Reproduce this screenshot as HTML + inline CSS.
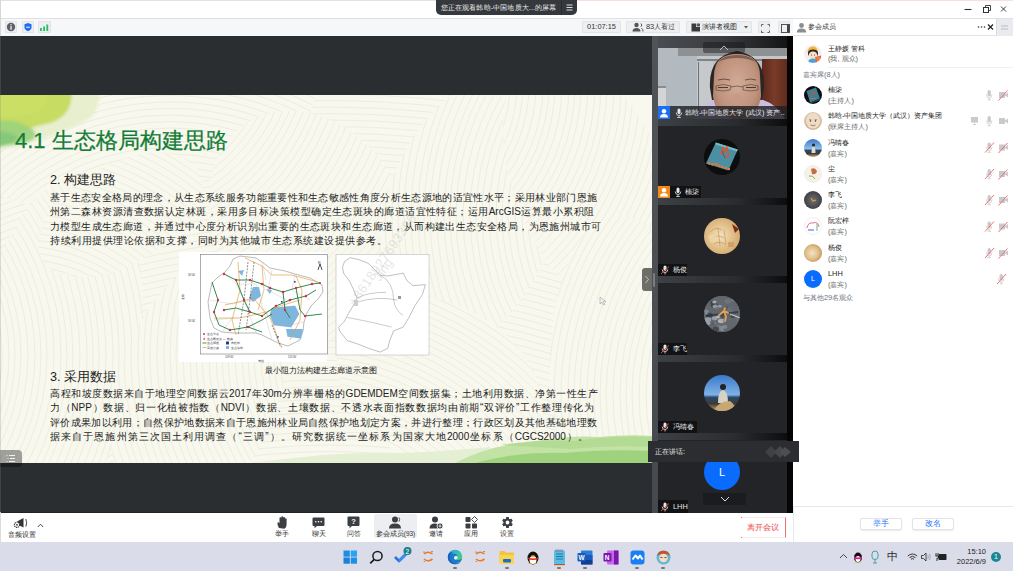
<!DOCTYPE html>
<html><head><meta charset="utf-8">
<style>
*{margin:0;padding:0;box-sizing:border-box}
html,body{width:1013px;height:571px;overflow:hidden;background:#fff;font-family:"Liberation Sans",sans-serif}
.a{position:absolute}
.nw{white-space:nowrap;overflow:hidden}
.tb{position:absolute;top:21px;height:12px;background:#eeeff1;border:1px solid #e3e4e7;border-radius:1px;font-size:7.4px;line-height:10px;color:#333;white-space:nowrap}
.bl{position:absolute;text-align:justify;text-align-last:justify;font-size:10px;line-height:14.6px;color:#222;white-space:nowrap;overflow:hidden}
.tile{position:absolute;left:658px;width:129px;background:#232427}
.lab{position:absolute;left:0;bottom:0;height:12px;background:#111214;color:#e8e8e8;font-size:7.4px;line-height:12px;white-space:nowrap}
.av{position:absolute;border-radius:50%;overflow:hidden}
.prow{position:absolute;left:793px;width:220px;height:26px}
.pn{position:absolute;left:35px;top:0;font-size:7.4px;line-height:10px;color:#222;white-space:nowrap}
.ps{position:absolute;left:35px;top:10px;font-size:7.4px;line-height:10px;color:#6a6a6a;white-space:nowrap}
.bi{position:absolute;top:514px;width:30px;text-align:center;font-size:7px;line-height:8px;color:#333}
.ti{position:absolute;top:548px}
</style></head><body>
<!-- ===== title bar ===== -->
<div class="a" style="left:0;top:0;width:440px;height:1px;background:#e2e2e2"></div><div class="a" style="left:440px;top:0;width:573px;height:1px;background:#f3e2dc"></div>
<div class="a" style="left:0;top:18px;width:1013px;height:1px;background:#dfe0e3"></div>

<!-- floating pill -->
<div class="a" style="left:436px;top:0;width:141px;height:15px;background:#35383c;border-radius:0 0 5px 5px"></div>
<div class="a nw" style="left:441px;top:3px;width:118px;font-size:7.4px;letter-spacing:0.1px;line-height:9px;color:#f0f0f0">您正在观看韩晗-中国地质大...的屏幕</div>
<div class="a" style="left:561px;top:0;width:1px;height:15px;background:#2a2c30"></div>
<svg class="a" style="left:565px;top:3px" width="9" height="9"><path d="M1.5 2h6M1.5 4.5h6M1.5 7h6" stroke="#ddd" stroke-width="1"/></svg>
<!-- window controls -->
<svg class="a" style="left:962px;top:4px" width="48" height="11">
<path d="M2.5 5.5h7" stroke="#333" stroke-width="1.1"/>
<rect x="21.5" y="3.5" width="5" height="5" fill="none" stroke="#333" stroke-width="1"/><path d="M23.5 3.5V1.5H28.5V6.5H26.5" fill="none" stroke="#333" stroke-width="0.9"/>
<path d="M39 2.5l5 5M44 2.5l-5 5" stroke="#333" stroke-width="0.95"/>
</svg>
<!-- ===== toolbar ===== -->
<div class="a" style="left:1px;top:19px;width:792px;height:17px;background:#f6f7f9"></div>
<div class="a" style="left:793px;top:19px;width:220px;height:17px;background:#fff"></div>
<div class="a" style="left:793px;top:35px;width:220px;height:1px;background:#e3e4e8"></div>
<div class="a" style="left:996px;top:19px;width:17px;height:17px;background:#e9ebef;border-left:1px solid #dcdde1"></div>
<svg class="a" style="left:1000px;top:24px" width="9" height="7"><path d="M1 2h7M1 5h7" stroke="#b9bcc2" stroke-width="1.2"/></svg>
<!-- left icons -->
<div class="a" style="left:5px;top:21px;width:12px;height:12px;background:#eceef1;border:1px solid #e2e4e7;border-radius:1px"></div>
<svg class="a" style="left:6px;top:22px" width="10" height="10"><circle cx="5" cy="5" r="4.2" fill="#5c5f66"/><rect x="4.4" y="2.2" width="1.2" height="1.1" fill="#fff"/><rect x="4.4" y="4.1" width="1.2" height="3.7" fill="#fff"/></svg>
<div class="a" style="left:22px;top:21px;width:12px;height:12px;background:#eceef1;border:1px solid #e2e4e7;border-radius:1px"></div>
<svg class="a" style="left:23px;top:22px" width="10" height="10"><path d="M5 1L8.5 2.2V5.2Q8.5 7.8 5 9.2Q1.5 7.8 1.5 5.2V2.2Z" fill="#1e6cf0"/><path d="M3.2 5.2h3.6" stroke="#fff" stroke-width="1"/></svg>
<div class="a" style="left:38px;top:21px;width:13px;height:12px;background:#eceef1;border:1px solid #e2e4e7;border-radius:1px"></div>
<svg class="a" style="left:39px;top:22px" width="11" height="10"><rect x="1" y="6" width="1.8" height="3" fill="#22c05a"/><rect x="4.2" y="4.5" width="1.8" height="4.5" fill="#22c05a"/><rect x="7.4" y="2.5" width="1.8" height="6.5" fill="#22c05a"/></svg>
<!-- center-right toolbar -->
<div class="tb" style="left:582px;width:39px;text-align:center;color:#333">01:07:15</div>
<div class="tb" style="left:626px;width:54px">
 <svg class="a" style="left:5px;top:0px" width="12" height="10"><circle cx="4.5" cy="3" r="2.2" fill="#555"/><path d="M0.5 9.5Q0.5 6 4.5 6Q8.5 6 8.5 9.5Z" fill="#555"/><path d="M9 1.5Q10.5 3 9 4.8M9.5 6.2Q11 7 11 9.5" stroke="#555" stroke-width="1" fill="none"/></svg>
 <span class="a" style="left:19px;top:0">83人看过</span></div>
<div class="tb" style="left:686px;width:66px">
 <svg class="a" style="left:4px;top:1px" width="10" height="9"><path d="M0.5 0.5H5V4H9V8.5H0.5Z" fill="#3a3a3a"/><rect x="5.6" y="0.5" width="3.4" height="2.9" fill="#555"/></svg>
 <span class="a" style="left:15px;top:0;color:#222">演讲者视图</span>
 <svg class="a" style="left:57px;top:4px" width="4" height="3"><path d="M0 0h4L2 2.5z" fill="#555"/></svg></div>
<div class="tb" style="left:758px;width:12px"><svg class="a" style="left:1.5px;top:1.5px" width="9" height="9"><path d="M0.5 2.5V0.5H2.5M6.5 0.5h2V2.5M8.5 6.5v2H6.5M2.5 8.5H0.5V6.5" stroke="#555" stroke-width="0.9" fill="none"/></svg></div>
<div class="tb" style="left:778px;width:12px"><svg class="a" style="left:1.5px;top:1.5px" width="9" height="9"><rect x="0.5" y="0.5" width="8" height="8" fill="none" stroke="#444" stroke-width="0.9"/><rect x="6" y="0.5" width="2.5" height="8" fill="#444"/></svg></div>
<!-- panel header -->
<svg class="a" style="left:796px;top:22px" width="11" height="11"><circle cx="5.5" cy="3.5" r="2.4" fill="#8a8d93"/><path d="M0.8 10.5Q0.8 6.5 5.5 6.5Q10.2 6.5 10.2 10.5Z" fill="#8a8d93"/></svg>
<div class="a nw" style="left:808px;top:22px;font-size:7.4px;line-height:10px;color:#333">参会成员</div>
<svg class="a" style="left:977px;top:23px" width="18" height="8"><circle cx="1.5" cy="4" r="0.8" fill="#333"/><circle cx="4.5" cy="4" r="0.8" fill="#333"/><circle cx="7.5" cy="4" r="0.8" fill="#333"/><path d="M11 1.5l5 5M16 1.5l-5 5" stroke="#222" stroke-width="1.2"/></svg>
<!-- ===== main dark ===== -->
<div class="a" style="left:0;top:36px;width:652px;height:477px;background:#2b2e31"></div>
<div class="a" style="left:0;top:512px;width:652px;height:1px;background:#202326"></div>
<!-- ===== slide ===== -->
<div class="a" style="left:0;top:95px;width:652px;height:368px;background:#f8f8ef;overflow:hidden">
 <svg class="a" style="left:0;top:0" width="652" height="368" viewBox="0 0 652 368">
  <defs>
   <radialGradient id="gtl" cx="0.25" cy="0.2" r="0.8"><stop offset="0" stop-color="#b9d65a"/><stop offset="0.55" stop-color="#cfe38f"/><stop offset="1" stop-color="#eef3d8" stop-opacity="0"/></radialGradient>
   <linearGradient id="gbr" x1="0" y1="0" x2="0" y2="1"><stop offset="0" stop-color="#a8d67e"/><stop offset="1" stop-color="#8cc56a"/></linearGradient>
  </defs>
<defs>
<clipPath id="lf0"><ellipse cx="330" cy="200" rx="400" ry="260" transform="rotate(0 330 200)"/></clipPath>
<clipPath id="lf1"><ellipse cx="150" cy="40" rx="170" ry="60" transform="rotate(-15 150 40)"/></clipPath>
<clipPath id="lf2"><ellipse cx="60" cy="250" rx="80" ry="170" transform="rotate(8 60 250)"/></clipPath>
<clipPath id="lf3"><ellipse cx="200" cy="290" rx="80" ry="140" transform="rotate(20 200 290)"/></clipPath>
<clipPath id="lf4"><ellipse cx="310" cy="130" rx="95" ry="120" transform="rotate(-30 310 130)"/></clipPath>
<clipPath id="lf5"><ellipse cx="470" cy="120" rx="85" ry="140" transform="rotate(18 470 120)"/></clipPath>
<clipPath id="lf6"><ellipse cx="590" cy="90" rx="75" ry="140" transform="rotate(-22 590 90)"/></clipPath>
<clipPath id="lf7"><ellipse cx="620" cy="270" rx="70" ry="150" transform="rotate(0 620 270)"/></clipPath>
<clipPath id="lf8"><ellipse cx="440" cy="290" rx="110" ry="80" transform="rotate(30 440 290)"/></clipPath>
<clipPath id="lf9"><ellipse cx="120" cy="120" rx="90" ry="50" transform="rotate(-30 120 120)"/></clipPath>
</defs>
<g clip-path="url(#lf0)"><ellipse cx="330" cy="200" rx="400" ry="260" transform="rotate(0 330 200)" fill="#f8f8ef"/><path d="M-60 1000a390.0 390.0 0 1 0 780.0 0a390.0 390.0 0 1 0 -780.0 0M-66 1000a396.5 396.5 0 1 0 793.0 0a396.5 396.5 0 1 0 -793.0 0M-73 1000a403.0 403.0 0 1 0 806.0 0a403.0 403.0 0 1 0 -806.0 0M-80 1000a409.5 409.5 0 1 0 819.0 0a409.5 409.5 0 1 0 -819.0 0M-86 1000a416.0 416.0 0 1 0 832.0 0a416.0 416.0 0 1 0 -832.0 0M-92 1000a422.5 422.5 0 1 0 845.0 0a422.5 422.5 0 1 0 -845.0 0M-99 1000a429.0 429.0 0 1 0 858.0 0a429.0 429.0 0 1 0 -858.0 0M-106 1000a435.5 435.5 0 1 0 871.0 0a435.5 435.5 0 1 0 -871.0 0M-112 1000a442.0 442.0 0 1 0 884.0 0a442.0 442.0 0 1 0 -884.0 0M-118 1000a448.5 448.5 0 1 0 897.0 0a448.5 448.5 0 1 0 -897.0 0M-125 1000a455.0 455.0 0 1 0 910.0 0a455.0 455.0 0 1 0 -910.0 0M-132 1000a461.5 461.5 0 1 0 923.0 0a461.5 461.5 0 1 0 -923.0 0M-138 1000a468.0 468.0 0 1 0 936.0 0a468.0 468.0 0 1 0 -936.0 0M-144 1000a474.5 474.5 0 1 0 949.0 0a474.5 474.5 0 1 0 -949.0 0M-151 1000a481.0 481.0 0 1 0 962.0 0a481.0 481.0 0 1 0 -962.0 0M-158 1000a487.5 487.5 0 1 0 975.0 0a487.5 487.5 0 1 0 -975.0 0M-164 1000a494.0 494.0 0 1 0 988.0 0a494.0 494.0 0 1 0 -988.0 0M-170 1000a500.5 500.5 0 1 0 1001.0 0a500.5 500.5 0 1 0 -1001.0 0M-177 1000a507.0 507.0 0 1 0 1014.0 0a507.0 507.0 0 1 0 -1014.0 0M-184 1000a513.5 513.5 0 1 0 1027.0 0a513.5 513.5 0 1 0 -1027.0 0M-190 1000a520.0 520.0 0 1 0 1040.0 0a520.0 520.0 0 1 0 -1040.0 0M-196 1000a526.5 526.5 0 1 0 1053.0 0a526.5 526.5 0 1 0 -1053.0 0M-203 1000a533.0 533.0 0 1 0 1066.0 0a533.0 533.0 0 1 0 -1066.0 0M-210 1000a539.5 539.5 0 1 0 1079.0 0a539.5 539.5 0 1 0 -1079.0 0M-216 1000a546.0 546.0 0 1 0 1092.0 0a546.0 546.0 0 1 0 -1092.0 0M-222 1000a552.5 552.5 0 1 0 1105.0 0a552.5 552.5 0 1 0 -1105.0 0M-229 1000a559.0 559.0 0 1 0 1118.0 0a559.0 559.0 0 1 0 -1118.0 0M-236 1000a565.5 565.5 0 1 0 1131.0 0a565.5 565.5 0 1 0 -1131.0 0M-242 1000a572.0 572.0 0 1 0 1144.0 0a572.0 572.0 0 1 0 -1144.0 0M-248 1000a578.5 578.5 0 1 0 1157.0 0a578.5 578.5 0 1 0 -1157.0 0M-255 1000a585.0 585.0 0 1 0 1170.0 0a585.0 585.0 0 1 0 -1170.0 0M-262 1000a591.5 591.5 0 1 0 1183.0 0a591.5 591.5 0 1 0 -1183.0 0M-268 1000a598.0 598.0 0 1 0 1196.0 0a598.0 598.0 0 1 0 -1196.0 0M-274 1000a604.5 604.5 0 1 0 1209.0 0a604.5 604.5 0 1 0 -1209.0 0M-281 1000a611.0 611.0 0 1 0 1222.0 0a611.0 611.0 0 1 0 -1222.0 0M-288 1000a617.5 617.5 0 1 0 1235.0 0a617.5 617.5 0 1 0 -1235.0 0M-294 1000a624.0 624.0 0 1 0 1248.0 0a624.0 624.0 0 1 0 -1248.0 0M-300 1000a630.5 630.5 0 1 0 1261.0 0a630.5 630.5 0 1 0 -1261.0 0M-307 1000a637.0 637.0 0 1 0 1274.0 0a637.0 637.0 0 1 0 -1274.0 0M-314 1000a643.5 643.5 0 1 0 1287.0 0a643.5 643.5 0 1 0 -1287.0 0M-320 1000a650.0 650.0 0 1 0 1300.0 0a650.0 650.0 0 1 0 -1300.0 0M-326 1000a656.5 656.5 0 1 0 1313.0 0a656.5 656.5 0 1 0 -1313.0 0M-333 1000a663.0 663.0 0 1 0 1326.0 0a663.0 663.0 0 1 0 -1326.0 0M-340 1000a669.5 669.5 0 1 0 1339.0 0a669.5 669.5 0 1 0 -1339.0 0M-346 1000a676.0 676.0 0 1 0 1352.0 0a676.0 676.0 0 1 0 -1352.0 0M-352 1000a682.5 682.5 0 1 0 1365.0 0a682.5 682.5 0 1 0 -1365.0 0M-359 1000a689.0 689.0 0 1 0 1378.0 0a689.0 689.0 0 1 0 -1378.0 0M-366 1000a695.5 695.5 0 1 0 1391.0 0a695.5 695.5 0 1 0 -1391.0 0M-372 1000a702.0 702.0 0 1 0 1404.0 0a702.0 702.0 0 1 0 -1404.0 0M-378 1000a708.5 708.5 0 1 0 1417.0 0a708.5 708.5 0 1 0 -1417.0 0M-385 1000a715.0 715.0 0 1 0 1430.0 0a715.0 715.0 0 1 0 -1430.0 0M-392 1000a721.5 721.5 0 1 0 1443.0 0a721.5 721.5 0 1 0 -1443.0 0M-398 1000a728.0 728.0 0 1 0 1456.0 0a728.0 728.0 0 1 0 -1456.0 0M-404 1000a734.5 734.5 0 1 0 1469.0 0a734.5 734.5 0 1 0 -1469.0 0M-411 1000a741.0 741.0 0 1 0 1482.0 0a741.0 741.0 0 1 0 -1482.0 0M-418 1000a747.5 747.5 0 1 0 1495.0 0a747.5 747.5 0 1 0 -1495.0 0M-424 1000a754.0 754.0 0 1 0 1508.0 0a754.0 754.0 0 1 0 -1508.0 0M-430 1000a760.5 760.5 0 1 0 1521.0 0a760.5 760.5 0 1 0 -1521.0 0M-437 1000a767.0 767.0 0 1 0 1534.0 0a767.0 767.0 0 1 0 -1534.0 0M-444 1000a773.5 773.5 0 1 0 1547.0 0a773.5 773.5 0 1 0 -1547.0 0M-450 1000a780.0 780.0 0 1 0 1560.0 0a780.0 780.0 0 1 0 -1560.0 0M-456 1000a786.5 786.5 0 1 0 1573.0 0a786.5 786.5 0 1 0 -1573.0 0M-463 1000a793.0 793.0 0 1 0 1586.0 0a793.0 793.0 0 1 0 -1586.0 0M-470 1000a799.5 799.5 0 1 0 1599.0 0a799.5 799.5 0 1 0 -1599.0 0M-476 1000a806.0 806.0 0 1 0 1612.0 0a806.0 806.0 0 1 0 -1612.0 0M-482 1000a812.5 812.5 0 1 0 1625.0 0a812.5 812.5 0 1 0 -1625.0 0M-489 1000a819.0 819.0 0 1 0 1638.0 0a819.0 819.0 0 1 0 -1638.0 0M-496 1000a825.5 825.5 0 1 0 1651.0 0a825.5 825.5 0 1 0 -1651.0 0M-502 1000a832.0 832.0 0 1 0 1664.0 0a832.0 832.0 0 1 0 -1664.0 0M-508 1000a838.5 838.5 0 1 0 1677.0 0a838.5 838.5 0 1 0 -1677.0 0M-515 1000a845.0 845.0 0 1 0 1690.0 0a845.0 845.0 0 1 0 -1690.0 0M-522 1000a851.5 851.5 0 1 0 1703.0 0a851.5 851.5 0 1 0 -1703.0 0M-528 1000a858.0 858.0 0 1 0 1716.0 0a858.0 858.0 0 1 0 -1716.0 0M-534 1000a864.5 864.5 0 1 0 1729.0 0a864.5 864.5 0 1 0 -1729.0 0M-541 1000a871.0 871.0 0 1 0 1742.0 0a871.0 871.0 0 1 0 -1742.0 0M-548 1000a877.5 877.5 0 1 0 1755.0 0a877.5 877.5 0 1 0 -1755.0 0M-554 1000a884.0 884.0 0 1 0 1768.0 0a884.0 884.0 0 1 0 -1768.0 0M-560 1000a890.5 890.5 0 1 0 1781.0 0a890.5 890.5 0 1 0 -1781.0 0M-567 1000a897.0 897.0 0 1 0 1794.0 0a897.0 897.0 0 1 0 -1794.0 0M-574 1000a903.5 903.5 0 1 0 1807.0 0a903.5 903.5 0 1 0 -1807.0 0M-580 1000a910.0 910.0 0 1 0 1820.0 0a910.0 910.0 0 1 0 -1820.0 0M-586 1000a916.5 916.5 0 1 0 1833.0 0a916.5 916.5 0 1 0 -1833.0 0M-593 1000a923.0 923.0 0 1 0 1846.0 0a923.0 923.0 0 1 0 -1846.0 0M-600 1000a929.5 929.5 0 1 0 1859.0 0a929.5 929.5 0 1 0 -1859.0 0M-606 1000a936.0 936.0 0 1 0 1872.0 0a936.0 936.0 0 1 0 -1872.0 0M-612 1000a942.5 942.5 0 1 0 1885.0 0a942.5 942.5 0 1 0 -1885.0 0M-619 1000a949.0 949.0 0 1 0 1898.0 0a949.0 949.0 0 1 0 -1898.0 0M-626 1000a955.5 955.5 0 1 0 1911.0 0a955.5 955.5 0 1 0 -1911.0 0M-632 1000a962.0 962.0 0 1 0 1924.0 0a962.0 962.0 0 1 0 -1924.0 0M-638 1000a968.5 968.5 0 1 0 1937.0 0a968.5 968.5 0 1 0 -1937.0 0M-645 1000a975.0 975.0 0 1 0 1950.0 0a975.0 975.0 0 1 0 -1950.0 0M-652 1000a981.5 981.5 0 1 0 1963.0 0a981.5 981.5 0 1 0 -1963.0 0M-658 1000a988.0 988.0 0 1 0 1976.0 0a988.0 988.0 0 1 0 -1976.0 0M-664 1000a994.5 994.5 0 1 0 1989.0 0a994.5 994.5 0 1 0 -1989.0 0M-671 1000a1001.0 1001.0 0 1 0 2002.0 0a1001.0 1001.0 0 1 0 -2002.0 0M-678 1000a1007.5 1007.5 0 1 0 2015.0 0a1007.5 1007.5 0 1 0 -2015.0 0M-684 1000a1014.0 1014.0 0 1 0 2028.0 0a1014.0 1014.0 0 1 0 -2028.0 0M-690 1000a1020.5 1020.5 0 1 0 2041.0 0a1020.5 1020.5 0 1 0 -2041.0 0M-697 1000a1027.0 1027.0 0 1 0 2054.0 0a1027.0 1027.0 0 1 0 -2054.0 0M-704 1000a1033.5 1033.5 0 1 0 2067.0 0a1033.5 1033.5 0 1 0 -2067.0 0M-710 1000a1040.0 1040.0 0 1 0 2080.0 0a1040.0 1040.0 0 1 0 -2080.0 0M-716 1000a1046.5 1046.5 0 1 0 2093.0 0a1046.5 1046.5 0 1 0 -2093.0 0M-723 1000a1053.0 1053.0 0 1 0 2106.0 0a1053.0 1053.0 0 1 0 -2106.0 0M-730 1000a1059.5 1059.5 0 1 0 2119.0 0a1059.5 1059.5 0 1 0 -2119.0 0M-736 1000a1066.0 1066.0 0 1 0 2132.0 0a1066.0 1066.0 0 1 0 -2132.0 0M-742 1000a1072.5 1072.5 0 1 0 2145.0 0a1072.5 1072.5 0 1 0 -2145.0 0M-749 1000a1079.0 1079.0 0 1 0 2158.0 0a1079.0 1079.0 0 1 0 -2158.0 0M-756 1000a1085.5 1085.5 0 1 0 2171.0 0a1085.5 1085.5 0 1 0 -2171.0 0M-762 1000a1092.0 1092.0 0 1 0 2184.0 0a1092.0 1092.0 0 1 0 -2184.0 0M-768 1000a1098.5 1098.5 0 1 0 2197.0 0a1098.5 1098.5 0 1 0 -2197.0 0M-775 1000a1105.0 1105.0 0 1 0 2210.0 0a1105.0 1105.0 0 1 0 -2210.0 0M-782 1000a1111.5 1111.5 0 1 0 2223.0 0a1111.5 1111.5 0 1 0 -2223.0 0M-788 1000a1118.0 1118.0 0 1 0 2236.0 0a1118.0 1118.0 0 1 0 -2236.0 0M-794 1000a1124.5 1124.5 0 1 0 2249.0 0a1124.5 1124.5 0 1 0 -2249.0 0M-801 1000a1131.0 1131.0 0 1 0 2262.0 0a1131.0 1131.0 0 1 0 -2262.0 0M-808 1000a1137.5 1137.5 0 1 0 2275.0 0a1137.5 1137.5 0 1 0 -2275.0 0M-814 1000a1144.0 1144.0 0 1 0 2288.0 0a1144.0 1144.0 0 1 0 -2288.0 0M-820 1000a1150.5 1150.5 0 1 0 2301.0 0a1150.5 1150.5 0 1 0 -2301.0 0M-827 1000a1157.0 1157.0 0 1 0 2314.0 0a1157.0 1157.0 0 1 0 -2314.0 0M-834 1000a1163.5 1163.5 0 1 0 2327.0 0a1163.5 1163.5 0 1 0 -2327.0 0M-840 1000a1170.0 1170.0 0 1 0 2340.0 0a1170.0 1170.0 0 1 0 -2340.0 0M-846 1000a1176.5 1176.5 0 1 0 2353.0 0a1176.5 1176.5 0 1 0 -2353.0 0M-853 1000a1183.0 1183.0 0 1 0 2366.0 0a1183.0 1183.0 0 1 0 -2366.0 0M-860 1000a1189.5 1189.5 0 1 0 2379.0 0a1189.5 1189.5 0 1 0 -2379.0 0M-866 1000a1196.0 1196.0 0 1 0 2392.0 0a1196.0 1196.0 0 1 0 -2392.0 0M-872 1000a1202.5 1202.5 0 1 0 2405.0 0a1202.5 1202.5 0 1 0 -2405.0 0" fill="none" stroke="#e8ebd8" stroke-width="0.8"/></g>
<g clip-path="url(#lf1)"><ellipse cx="150" cy="40" rx="170" ry="60" transform="rotate(-15 150 40)" fill="#f8f8ef"/><path d="M105 280a65.0 65.0 0 1 0 130.0 0a65.0 65.0 0 1 0 -130.0 0M98 280a71.5 71.5 0 1 0 143.0 0a71.5 71.5 0 1 0 -143.0 0M92 280a78.0 78.0 0 1 0 156.0 0a78.0 78.0 0 1 0 -156.0 0M86 280a84.5 84.5 0 1 0 169.0 0a84.5 84.5 0 1 0 -169.0 0M79 280a91.0 91.0 0 1 0 182.0 0a91.0 91.0 0 1 0 -182.0 0M72 280a97.5 97.5 0 1 0 195.0 0a97.5 97.5 0 1 0 -195.0 0M66 280a104.0 104.0 0 1 0 208.0 0a104.0 104.0 0 1 0 -208.0 0M60 280a110.5 110.5 0 1 0 221.0 0a110.5 110.5 0 1 0 -221.0 0M53 280a117.0 117.0 0 1 0 234.0 0a117.0 117.0 0 1 0 -234.0 0M46 280a123.5 123.5 0 1 0 247.0 0a123.5 123.5 0 1 0 -247.0 0M40 280a130.0 130.0 0 1 0 260.0 0a130.0 130.0 0 1 0 -260.0 0M34 280a136.5 136.5 0 1 0 273.0 0a136.5 136.5 0 1 0 -273.0 0M27 280a143.0 143.0 0 1 0 286.0 0a143.0 143.0 0 1 0 -286.0 0M20 280a149.5 149.5 0 1 0 299.0 0a149.5 149.5 0 1 0 -299.0 0M14 280a156.0 156.0 0 1 0 312.0 0a156.0 156.0 0 1 0 -312.0 0M8 280a162.5 162.5 0 1 0 325.0 0a162.5 162.5 0 1 0 -325.0 0M1 280a169.0 169.0 0 1 0 338.0 0a169.0 169.0 0 1 0 -338.0 0M-6 280a175.5 175.5 0 1 0 351.0 0a175.5 175.5 0 1 0 -351.0 0M-12 280a182.0 182.0 0 1 0 364.0 0a182.0 182.0 0 1 0 -364.0 0M-18 280a188.5 188.5 0 1 0 377.0 0a188.5 188.5 0 1 0 -377.0 0M-25 280a195.0 195.0 0 1 0 390.0 0a195.0 195.0 0 1 0 -390.0 0M-32 280a201.5 201.5 0 1 0 403.0 0a201.5 201.5 0 1 0 -403.0 0M-38 280a208.0 208.0 0 1 0 416.0 0a208.0 208.0 0 1 0 -416.0 0M-44 280a214.5 214.5 0 1 0 429.0 0a214.5 214.5 0 1 0 -429.0 0M-51 280a221.0 221.0 0 1 0 442.0 0a221.0 221.0 0 1 0 -442.0 0M-58 280a227.5 227.5 0 1 0 455.0 0a227.5 227.5 0 1 0 -455.0 0M-64 280a234.0 234.0 0 1 0 468.0 0a234.0 234.0 0 1 0 -468.0 0M-70 280a240.5 240.5 0 1 0 481.0 0a240.5 240.5 0 1 0 -481.0 0M-77 280a247.0 247.0 0 1 0 494.0 0a247.0 247.0 0 1 0 -494.0 0M-84 280a253.5 253.5 0 1 0 507.0 0a253.5 253.5 0 1 0 -507.0 0M-90 280a260.0 260.0 0 1 0 520.0 0a260.0 260.0 0 1 0 -520.0 0M-96 280a266.5 266.5 0 1 0 533.0 0a266.5 266.5 0 1 0 -533.0 0M-103 280a273.0 273.0 0 1 0 546.0 0a273.0 273.0 0 1 0 -546.0 0M-110 280a279.5 279.5 0 1 0 559.0 0a279.5 279.5 0 1 0 -559.0 0M-116 280a286.0 286.0 0 1 0 572.0 0a286.0 286.0 0 1 0 -572.0 0M-122 280a292.5 292.5 0 1 0 585.0 0a292.5 292.5 0 1 0 -585.0 0M-129 280a299.0 299.0 0 1 0 598.0 0a299.0 299.0 0 1 0 -598.0 0M-136 280a305.5 305.5 0 1 0 611.0 0a305.5 305.5 0 1 0 -611.0 0M-142 280a312.0 312.0 0 1 0 624.0 0a312.0 312.0 0 1 0 -624.0 0M-148 280a318.5 318.5 0 1 0 637.0 0a318.5 318.5 0 1 0 -637.0 0M-155 280a325.0 325.0 0 1 0 650.0 0a325.0 325.0 0 1 0 -650.0 0M-162 280a331.5 331.5 0 1 0 663.0 0a331.5 331.5 0 1 0 -663.0 0M-168 280a338.0 338.0 0 1 0 676.0 0a338.0 338.0 0 1 0 -676.0 0M-174 280a344.5 344.5 0 1 0 689.0 0a344.5 344.5 0 1 0 -689.0 0M-181 280a351.0 351.0 0 1 0 702.0 0a351.0 351.0 0 1 0 -702.0 0M-188 280a357.5 357.5 0 1 0 715.0 0a357.5 357.5 0 1 0 -715.0 0M-194 280a364.0 364.0 0 1 0 728.0 0a364.0 364.0 0 1 0 -728.0 0M-200 280a370.5 370.5 0 1 0 741.0 0a370.5 370.5 0 1 0 -741.0 0M-207 280a377.0 377.0 0 1 0 754.0 0a377.0 377.0 0 1 0 -754.0 0M-214 280a383.5 383.5 0 1 0 767.0 0a383.5 383.5 0 1 0 -767.0 0M-220 280a390.0 390.0 0 1 0 780.0 0a390.0 390.0 0 1 0 -780.0 0M-226 280a396.5 396.5 0 1 0 793.0 0a396.5 396.5 0 1 0 -793.0 0M-233 280a403.0 403.0 0 1 0 806.0 0a403.0 403.0 0 1 0 -806.0 0M-240 280a409.5 409.5 0 1 0 819.0 0a409.5 409.5 0 1 0 -819.0 0" fill="none" stroke="#e8ebd8" stroke-width="0.8"/></g>
<g clip-path="url(#lf2)"><ellipse cx="60" cy="250" rx="80" ry="170" transform="rotate(8 60 250)" fill="#f8f8ef"/><path d="M-245 260a65.0 65.0 0 1 0 130.0 0a65.0 65.0 0 1 0 -130.0 0M-252 260a71.5 71.5 0 1 0 143.0 0a71.5 71.5 0 1 0 -143.0 0M-258 260a78.0 78.0 0 1 0 156.0 0a78.0 78.0 0 1 0 -156.0 0M-264 260a84.5 84.5 0 1 0 169.0 0a84.5 84.5 0 1 0 -169.0 0M-271 260a91.0 91.0 0 1 0 182.0 0a91.0 91.0 0 1 0 -182.0 0M-278 260a97.5 97.5 0 1 0 195.0 0a97.5 97.5 0 1 0 -195.0 0M-284 260a104.0 104.0 0 1 0 208.0 0a104.0 104.0 0 1 0 -208.0 0M-290 260a110.5 110.5 0 1 0 221.0 0a110.5 110.5 0 1 0 -221.0 0M-297 260a117.0 117.0 0 1 0 234.0 0a117.0 117.0 0 1 0 -234.0 0M-304 260a123.5 123.5 0 1 0 247.0 0a123.5 123.5 0 1 0 -247.0 0M-310 260a130.0 130.0 0 1 0 260.0 0a130.0 130.0 0 1 0 -260.0 0M-316 260a136.5 136.5 0 1 0 273.0 0a136.5 136.5 0 1 0 -273.0 0M-323 260a143.0 143.0 0 1 0 286.0 0a143.0 143.0 0 1 0 -286.0 0M-330 260a149.5 149.5 0 1 0 299.0 0a149.5 149.5 0 1 0 -299.0 0M-336 260a156.0 156.0 0 1 0 312.0 0a156.0 156.0 0 1 0 -312.0 0M-342 260a162.5 162.5 0 1 0 325.0 0a162.5 162.5 0 1 0 -325.0 0M-349 260a169.0 169.0 0 1 0 338.0 0a169.0 169.0 0 1 0 -338.0 0M-356 260a175.5 175.5 0 1 0 351.0 0a175.5 175.5 0 1 0 -351.0 0M-362 260a182.0 182.0 0 1 0 364.0 0a182.0 182.0 0 1 0 -364.0 0M-368 260a188.5 188.5 0 1 0 377.0 0a188.5 188.5 0 1 0 -377.0 0M-375 260a195.0 195.0 0 1 0 390.0 0a195.0 195.0 0 1 0 -390.0 0M-382 260a201.5 201.5 0 1 0 403.0 0a201.5 201.5 0 1 0 -403.0 0M-388 260a208.0 208.0 0 1 0 416.0 0a208.0 208.0 0 1 0 -416.0 0M-394 260a214.5 214.5 0 1 0 429.0 0a214.5 214.5 0 1 0 -429.0 0M-401 260a221.0 221.0 0 1 0 442.0 0a221.0 221.0 0 1 0 -442.0 0M-408 260a227.5 227.5 0 1 0 455.0 0a227.5 227.5 0 1 0 -455.0 0M-414 260a234.0 234.0 0 1 0 468.0 0a234.0 234.0 0 1 0 -468.0 0M-420 260a240.5 240.5 0 1 0 481.0 0a240.5 240.5 0 1 0 -481.0 0M-427 260a247.0 247.0 0 1 0 494.0 0a247.0 247.0 0 1 0 -494.0 0M-434 260a253.5 253.5 0 1 0 507.0 0a253.5 253.5 0 1 0 -507.0 0M-440 260a260.0 260.0 0 1 0 520.0 0a260.0 260.0 0 1 0 -520.0 0M-446 260a266.5 266.5 0 1 0 533.0 0a266.5 266.5 0 1 0 -533.0 0M-453 260a273.0 273.0 0 1 0 546.0 0a273.0 273.0 0 1 0 -546.0 0M-460 260a279.5 279.5 0 1 0 559.0 0a279.5 279.5 0 1 0 -559.0 0M-466 260a286.0 286.0 0 1 0 572.0 0a286.0 286.0 0 1 0 -572.0 0M-472 260a292.5 292.5 0 1 0 585.0 0a292.5 292.5 0 1 0 -585.0 0M-479 260a299.0 299.0 0 1 0 598.0 0a299.0 299.0 0 1 0 -598.0 0M-486 260a305.5 305.5 0 1 0 611.0 0a305.5 305.5 0 1 0 -611.0 0M-492 260a312.0 312.0 0 1 0 624.0 0a312.0 312.0 0 1 0 -624.0 0M-498 260a318.5 318.5 0 1 0 637.0 0a318.5 318.5 0 1 0 -637.0 0M-505 260a325.0 325.0 0 1 0 650.0 0a325.0 325.0 0 1 0 -650.0 0M-512 260a331.5 331.5 0 1 0 663.0 0a331.5 331.5 0 1 0 -663.0 0M-518 260a338.0 338.0 0 1 0 676.0 0a338.0 338.0 0 1 0 -676.0 0M-524 260a344.5 344.5 0 1 0 689.0 0a344.5 344.5 0 1 0 -689.0 0M-531 260a351.0 351.0 0 1 0 702.0 0a351.0 351.0 0 1 0 -702.0 0M-538 260a357.5 357.5 0 1 0 715.0 0a357.5 357.5 0 1 0 -715.0 0M-544 260a364.0 364.0 0 1 0 728.0 0a364.0 364.0 0 1 0 -728.0 0M-550 260a370.5 370.5 0 1 0 741.0 0a370.5 370.5 0 1 0 -741.0 0M-557 260a377.0 377.0 0 1 0 754.0 0a377.0 377.0 0 1 0 -754.0 0M-564 260a383.5 383.5 0 1 0 767.0 0a383.5 383.5 0 1 0 -767.0 0M-570 260a390.0 390.0 0 1 0 780.0 0a390.0 390.0 0 1 0 -780.0 0M-576 260a396.5 396.5 0 1 0 793.0 0a396.5 396.5 0 1 0 -793.0 0M-583 260a403.0 403.0 0 1 0 806.0 0a403.0 403.0 0 1 0 -806.0 0M-590 260a409.5 409.5 0 1 0 819.0 0a409.5 409.5 0 1 0 -819.0 0" fill="none" stroke="#e8ebd8" stroke-width="0.8"/></g>
<g clip-path="url(#lf3)"><ellipse cx="200" cy="290" rx="80" ry="140" transform="rotate(20 200 290)" fill="#f8f8ef"/><path d="M346 260a84.5 84.5 0 1 0 169.0 0a84.5 84.5 0 1 0 -169.0 0M339 260a91.0 91.0 0 1 0 182.0 0a91.0 91.0 0 1 0 -182.0 0M332 260a97.5 97.5 0 1 0 195.0 0a97.5 97.5 0 1 0 -195.0 0M326 260a104.0 104.0 0 1 0 208.0 0a104.0 104.0 0 1 0 -208.0 0M320 260a110.5 110.5 0 1 0 221.0 0a110.5 110.5 0 1 0 -221.0 0M313 260a117.0 117.0 0 1 0 234.0 0a117.0 117.0 0 1 0 -234.0 0M306 260a123.5 123.5 0 1 0 247.0 0a123.5 123.5 0 1 0 -247.0 0M300 260a130.0 130.0 0 1 0 260.0 0a130.0 130.0 0 1 0 -260.0 0M294 260a136.5 136.5 0 1 0 273.0 0a136.5 136.5 0 1 0 -273.0 0M287 260a143.0 143.0 0 1 0 286.0 0a143.0 143.0 0 1 0 -286.0 0M280 260a149.5 149.5 0 1 0 299.0 0a149.5 149.5 0 1 0 -299.0 0M274 260a156.0 156.0 0 1 0 312.0 0a156.0 156.0 0 1 0 -312.0 0M268 260a162.5 162.5 0 1 0 325.0 0a162.5 162.5 0 1 0 -325.0 0M261 260a169.0 169.0 0 1 0 338.0 0a169.0 169.0 0 1 0 -338.0 0M254 260a175.5 175.5 0 1 0 351.0 0a175.5 175.5 0 1 0 -351.0 0M248 260a182.0 182.0 0 1 0 364.0 0a182.0 182.0 0 1 0 -364.0 0M242 260a188.5 188.5 0 1 0 377.0 0a188.5 188.5 0 1 0 -377.0 0M235 260a195.0 195.0 0 1 0 390.0 0a195.0 195.0 0 1 0 -390.0 0M228 260a201.5 201.5 0 1 0 403.0 0a201.5 201.5 0 1 0 -403.0 0M222 260a208.0 208.0 0 1 0 416.0 0a208.0 208.0 0 1 0 -416.0 0M216 260a214.5 214.5 0 1 0 429.0 0a214.5 214.5 0 1 0 -429.0 0M209 260a221.0 221.0 0 1 0 442.0 0a221.0 221.0 0 1 0 -442.0 0M202 260a227.5 227.5 0 1 0 455.0 0a227.5 227.5 0 1 0 -455.0 0M196 260a234.0 234.0 0 1 0 468.0 0a234.0 234.0 0 1 0 -468.0 0M190 260a240.5 240.5 0 1 0 481.0 0a240.5 240.5 0 1 0 -481.0 0M183 260a247.0 247.0 0 1 0 494.0 0a247.0 247.0 0 1 0 -494.0 0M176 260a253.5 253.5 0 1 0 507.0 0a253.5 253.5 0 1 0 -507.0 0M170 260a260.0 260.0 0 1 0 520.0 0a260.0 260.0 0 1 0 -520.0 0M164 260a266.5 266.5 0 1 0 533.0 0a266.5 266.5 0 1 0 -533.0 0M157 260a273.0 273.0 0 1 0 546.0 0a273.0 273.0 0 1 0 -546.0 0M150 260a279.5 279.5 0 1 0 559.0 0a279.5 279.5 0 1 0 -559.0 0M144 260a286.0 286.0 0 1 0 572.0 0a286.0 286.0 0 1 0 -572.0 0M138 260a292.5 292.5 0 1 0 585.0 0a292.5 292.5 0 1 0 -585.0 0M131 260a299.0 299.0 0 1 0 598.0 0a299.0 299.0 0 1 0 -598.0 0M124 260a305.5 305.5 0 1 0 611.0 0a305.5 305.5 0 1 0 -611.0 0M118 260a312.0 312.0 0 1 0 624.0 0a312.0 312.0 0 1 0 -624.0 0M112 260a318.5 318.5 0 1 0 637.0 0a318.5 318.5 0 1 0 -637.0 0M105 260a325.0 325.0 0 1 0 650.0 0a325.0 325.0 0 1 0 -650.0 0M98 260a331.5 331.5 0 1 0 663.0 0a331.5 331.5 0 1 0 -663.0 0M92 260a338.0 338.0 0 1 0 676.0 0a338.0 338.0 0 1 0 -676.0 0M86 260a344.5 344.5 0 1 0 689.0 0a344.5 344.5 0 1 0 -689.0 0M79 260a351.0 351.0 0 1 0 702.0 0a351.0 351.0 0 1 0 -702.0 0M72 260a357.5 357.5 0 1 0 715.0 0a357.5 357.5 0 1 0 -715.0 0M66 260a364.0 364.0 0 1 0 728.0 0a364.0 364.0 0 1 0 -728.0 0M60 260a370.5 370.5 0 1 0 741.0 0a370.5 370.5 0 1 0 -741.0 0" fill="none" stroke="#e8ebd8" stroke-width="0.8"/></g>
<g clip-path="url(#lf4)"><ellipse cx="310" cy="130" rx="95" ry="120" transform="rotate(-30 310 130)" fill="#f8f8ef"/><path d="M-40 -60a149.5 149.5 0 1 0 299.0 0a149.5 149.5 0 1 0 -299.0 0M-46 -60a156.0 156.0 0 1 0 312.0 0a156.0 156.0 0 1 0 -312.0 0M-52 -60a162.5 162.5 0 1 0 325.0 0a162.5 162.5 0 1 0 -325.0 0M-59 -60a169.0 169.0 0 1 0 338.0 0a169.0 169.0 0 1 0 -338.0 0M-66 -60a175.5 175.5 0 1 0 351.0 0a175.5 175.5 0 1 0 -351.0 0M-72 -60a182.0 182.0 0 1 0 364.0 0a182.0 182.0 0 1 0 -364.0 0M-78 -60a188.5 188.5 0 1 0 377.0 0a188.5 188.5 0 1 0 -377.0 0M-85 -60a195.0 195.0 0 1 0 390.0 0a195.0 195.0 0 1 0 -390.0 0M-92 -60a201.5 201.5 0 1 0 403.0 0a201.5 201.5 0 1 0 -403.0 0M-98 -60a208.0 208.0 0 1 0 416.0 0a208.0 208.0 0 1 0 -416.0 0M-104 -60a214.5 214.5 0 1 0 429.0 0a214.5 214.5 0 1 0 -429.0 0M-111 -60a221.0 221.0 0 1 0 442.0 0a221.0 221.0 0 1 0 -442.0 0M-118 -60a227.5 227.5 0 1 0 455.0 0a227.5 227.5 0 1 0 -455.0 0M-124 -60a234.0 234.0 0 1 0 468.0 0a234.0 234.0 0 1 0 -468.0 0M-130 -60a240.5 240.5 0 1 0 481.0 0a240.5 240.5 0 1 0 -481.0 0M-137 -60a247.0 247.0 0 1 0 494.0 0a247.0 247.0 0 1 0 -494.0 0M-144 -60a253.5 253.5 0 1 0 507.0 0a253.5 253.5 0 1 0 -507.0 0M-150 -60a260.0 260.0 0 1 0 520.0 0a260.0 260.0 0 1 0 -520.0 0M-156 -60a266.5 266.5 0 1 0 533.0 0a266.5 266.5 0 1 0 -533.0 0M-163 -60a273.0 273.0 0 1 0 546.0 0a273.0 273.0 0 1 0 -546.0 0M-170 -60a279.5 279.5 0 1 0 559.0 0a279.5 279.5 0 1 0 -559.0 0M-176 -60a286.0 286.0 0 1 0 572.0 0a286.0 286.0 0 1 0 -572.0 0M-182 -60a292.5 292.5 0 1 0 585.0 0a292.5 292.5 0 1 0 -585.0 0M-189 -60a299.0 299.0 0 1 0 598.0 0a299.0 299.0 0 1 0 -598.0 0M-196 -60a305.5 305.5 0 1 0 611.0 0a305.5 305.5 0 1 0 -611.0 0M-202 -60a312.0 312.0 0 1 0 624.0 0a312.0 312.0 0 1 0 -624.0 0M-208 -60a318.5 318.5 0 1 0 637.0 0a318.5 318.5 0 1 0 -637.0 0M-215 -60a325.0 325.0 0 1 0 650.0 0a325.0 325.0 0 1 0 -650.0 0M-222 -60a331.5 331.5 0 1 0 663.0 0a331.5 331.5 0 1 0 -663.0 0M-228 -60a338.0 338.0 0 1 0 676.0 0a338.0 338.0 0 1 0 -676.0 0M-234 -60a344.5 344.5 0 1 0 689.0 0a344.5 344.5 0 1 0 -689.0 0M-241 -60a351.0 351.0 0 1 0 702.0 0a351.0 351.0 0 1 0 -702.0 0M-248 -60a357.5 357.5 0 1 0 715.0 0a357.5 357.5 0 1 0 -715.0 0M-254 -60a364.0 364.0 0 1 0 728.0 0a364.0 364.0 0 1 0 -728.0 0M-260 -60a370.5 370.5 0 1 0 741.0 0a370.5 370.5 0 1 0 -741.0 0M-267 -60a377.0 377.0 0 1 0 754.0 0a377.0 377.0 0 1 0 -754.0 0M-274 -60a383.5 383.5 0 1 0 767.0 0a383.5 383.5 0 1 0 -767.0 0M-280 -60a390.0 390.0 0 1 0 780.0 0a390.0 390.0 0 1 0 -780.0 0M-286 -60a396.5 396.5 0 1 0 793.0 0a396.5 396.5 0 1 0 -793.0 0" fill="none" stroke="#e8ebd8" stroke-width="0.8"/></g>
<g clip-path="url(#lf5)"><ellipse cx="470" cy="120" rx="85" ry="140" transform="rotate(18 470 120)" fill="#f8f8ef"/><path d="M619 120a91.0 91.0 0 1 0 182.0 0a91.0 91.0 0 1 0 -182.0 0M612 120a97.5 97.5 0 1 0 195.0 0a97.5 97.5 0 1 0 -195.0 0M606 120a104.0 104.0 0 1 0 208.0 0a104.0 104.0 0 1 0 -208.0 0M600 120a110.5 110.5 0 1 0 221.0 0a110.5 110.5 0 1 0 -221.0 0M593 120a117.0 117.0 0 1 0 234.0 0a117.0 117.0 0 1 0 -234.0 0M586 120a123.5 123.5 0 1 0 247.0 0a123.5 123.5 0 1 0 -247.0 0M580 120a130.0 130.0 0 1 0 260.0 0a130.0 130.0 0 1 0 -260.0 0M574 120a136.5 136.5 0 1 0 273.0 0a136.5 136.5 0 1 0 -273.0 0M567 120a143.0 143.0 0 1 0 286.0 0a143.0 143.0 0 1 0 -286.0 0M560 120a149.5 149.5 0 1 0 299.0 0a149.5 149.5 0 1 0 -299.0 0M554 120a156.0 156.0 0 1 0 312.0 0a156.0 156.0 0 1 0 -312.0 0M548 120a162.5 162.5 0 1 0 325.0 0a162.5 162.5 0 1 0 -325.0 0M541 120a169.0 169.0 0 1 0 338.0 0a169.0 169.0 0 1 0 -338.0 0M534 120a175.5 175.5 0 1 0 351.0 0a175.5 175.5 0 1 0 -351.0 0M528 120a182.0 182.0 0 1 0 364.0 0a182.0 182.0 0 1 0 -364.0 0M522 120a188.5 188.5 0 1 0 377.0 0a188.5 188.5 0 1 0 -377.0 0M515 120a195.0 195.0 0 1 0 390.0 0a195.0 195.0 0 1 0 -390.0 0M508 120a201.5 201.5 0 1 0 403.0 0a201.5 201.5 0 1 0 -403.0 0M502 120a208.0 208.0 0 1 0 416.0 0a208.0 208.0 0 1 0 -416.0 0M496 120a214.5 214.5 0 1 0 429.0 0a214.5 214.5 0 1 0 -429.0 0M489 120a221.0 221.0 0 1 0 442.0 0a221.0 221.0 0 1 0 -442.0 0M482 120a227.5 227.5 0 1 0 455.0 0a227.5 227.5 0 1 0 -455.0 0M476 120a234.0 234.0 0 1 0 468.0 0a234.0 234.0 0 1 0 -468.0 0M470 120a240.5 240.5 0 1 0 481.0 0a240.5 240.5 0 1 0 -481.0 0M463 120a247.0 247.0 0 1 0 494.0 0a247.0 247.0 0 1 0 -494.0 0M456 120a253.5 253.5 0 1 0 507.0 0a253.5 253.5 0 1 0 -507.0 0M450 120a260.0 260.0 0 1 0 520.0 0a260.0 260.0 0 1 0 -520.0 0M444 120a266.5 266.5 0 1 0 533.0 0a266.5 266.5 0 1 0 -533.0 0M437 120a273.0 273.0 0 1 0 546.0 0a273.0 273.0 0 1 0 -546.0 0M430 120a279.5 279.5 0 1 0 559.0 0a279.5 279.5 0 1 0 -559.0 0M424 120a286.0 286.0 0 1 0 572.0 0a286.0 286.0 0 1 0 -572.0 0M418 120a292.5 292.5 0 1 0 585.0 0a292.5 292.5 0 1 0 -585.0 0M411 120a299.0 299.0 0 1 0 598.0 0a299.0 299.0 0 1 0 -598.0 0M404 120a305.5 305.5 0 1 0 611.0 0a305.5 305.5 0 1 0 -611.0 0M398 120a312.0 312.0 0 1 0 624.0 0a312.0 312.0 0 1 0 -624.0 0M392 120a318.5 318.5 0 1 0 637.0 0a318.5 318.5 0 1 0 -637.0 0M385 120a325.0 325.0 0 1 0 650.0 0a325.0 325.0 0 1 0 -650.0 0M378 120a331.5 331.5 0 1 0 663.0 0a331.5 331.5 0 1 0 -663.0 0M372 120a338.0 338.0 0 1 0 676.0 0a338.0 338.0 0 1 0 -676.0 0M366 120a344.5 344.5 0 1 0 689.0 0a344.5 344.5 0 1 0 -689.0 0M359 120a351.0 351.0 0 1 0 702.0 0a351.0 351.0 0 1 0 -702.0 0M352 120a357.5 357.5 0 1 0 715.0 0a357.5 357.5 0 1 0 -715.0 0M346 120a364.0 364.0 0 1 0 728.0 0a364.0 364.0 0 1 0 -728.0 0M340 120a370.5 370.5 0 1 0 741.0 0a370.5 370.5 0 1 0 -741.0 0M333 120a377.0 377.0 0 1 0 754.0 0a377.0 377.0 0 1 0 -754.0 0M326 120a383.5 383.5 0 1 0 767.0 0a383.5 383.5 0 1 0 -767.0 0" fill="none" stroke="#e8ebd8" stroke-width="0.8"/></g>
<g clip-path="url(#lf6)"><ellipse cx="590" cy="90" rx="75" ry="140" transform="rotate(-22 590 90)" fill="#f8f8ef"/><path d="M296 -10a84.5 84.5 0 1 0 169.0 0a84.5 84.5 0 1 0 -169.0 0M289 -10a91.0 91.0 0 1 0 182.0 0a91.0 91.0 0 1 0 -182.0 0M282 -10a97.5 97.5 0 1 0 195.0 0a97.5 97.5 0 1 0 -195.0 0M276 -10a104.0 104.0 0 1 0 208.0 0a104.0 104.0 0 1 0 -208.0 0M270 -10a110.5 110.5 0 1 0 221.0 0a110.5 110.5 0 1 0 -221.0 0M263 -10a117.0 117.0 0 1 0 234.0 0a117.0 117.0 0 1 0 -234.0 0M256 -10a123.5 123.5 0 1 0 247.0 0a123.5 123.5 0 1 0 -247.0 0M250 -10a130.0 130.0 0 1 0 260.0 0a130.0 130.0 0 1 0 -260.0 0M244 -10a136.5 136.5 0 1 0 273.0 0a136.5 136.5 0 1 0 -273.0 0M237 -10a143.0 143.0 0 1 0 286.0 0a143.0 143.0 0 1 0 -286.0 0M230 -10a149.5 149.5 0 1 0 299.0 0a149.5 149.5 0 1 0 -299.0 0M224 -10a156.0 156.0 0 1 0 312.0 0a156.0 156.0 0 1 0 -312.0 0M218 -10a162.5 162.5 0 1 0 325.0 0a162.5 162.5 0 1 0 -325.0 0M211 -10a169.0 169.0 0 1 0 338.0 0a169.0 169.0 0 1 0 -338.0 0M204 -10a175.5 175.5 0 1 0 351.0 0a175.5 175.5 0 1 0 -351.0 0M198 -10a182.0 182.0 0 1 0 364.0 0a182.0 182.0 0 1 0 -364.0 0M192 -10a188.5 188.5 0 1 0 377.0 0a188.5 188.5 0 1 0 -377.0 0M185 -10a195.0 195.0 0 1 0 390.0 0a195.0 195.0 0 1 0 -390.0 0M178 -10a201.5 201.5 0 1 0 403.0 0a201.5 201.5 0 1 0 -403.0 0M172 -10a208.0 208.0 0 1 0 416.0 0a208.0 208.0 0 1 0 -416.0 0M166 -10a214.5 214.5 0 1 0 429.0 0a214.5 214.5 0 1 0 -429.0 0M159 -10a221.0 221.0 0 1 0 442.0 0a221.0 221.0 0 1 0 -442.0 0M152 -10a227.5 227.5 0 1 0 455.0 0a227.5 227.5 0 1 0 -455.0 0M146 -10a234.0 234.0 0 1 0 468.0 0a234.0 234.0 0 1 0 -468.0 0M140 -10a240.5 240.5 0 1 0 481.0 0a240.5 240.5 0 1 0 -481.0 0M133 -10a247.0 247.0 0 1 0 494.0 0a247.0 247.0 0 1 0 -494.0 0M126 -10a253.5 253.5 0 1 0 507.0 0a253.5 253.5 0 1 0 -507.0 0M120 -10a260.0 260.0 0 1 0 520.0 0a260.0 260.0 0 1 0 -520.0 0M114 -10a266.5 266.5 0 1 0 533.0 0a266.5 266.5 0 1 0 -533.0 0M107 -10a273.0 273.0 0 1 0 546.0 0a273.0 273.0 0 1 0 -546.0 0M100 -10a279.5 279.5 0 1 0 559.0 0a279.5 279.5 0 1 0 -559.0 0M94 -10a286.0 286.0 0 1 0 572.0 0a286.0 286.0 0 1 0 -572.0 0M88 -10a292.5 292.5 0 1 0 585.0 0a292.5 292.5 0 1 0 -585.0 0M81 -10a299.0 299.0 0 1 0 598.0 0a299.0 299.0 0 1 0 -598.0 0M74 -10a305.5 305.5 0 1 0 611.0 0a305.5 305.5 0 1 0 -611.0 0M68 -10a312.0 312.0 0 1 0 624.0 0a312.0 312.0 0 1 0 -624.0 0M62 -10a318.5 318.5 0 1 0 637.0 0a318.5 318.5 0 1 0 -637.0 0M55 -10a325.0 325.0 0 1 0 650.0 0a325.0 325.0 0 1 0 -650.0 0M48 -10a331.5 331.5 0 1 0 663.0 0a331.5 331.5 0 1 0 -663.0 0M42 -10a338.0 338.0 0 1 0 676.0 0a338.0 338.0 0 1 0 -676.0 0M36 -10a344.5 344.5 0 1 0 689.0 0a344.5 344.5 0 1 0 -689.0 0M29 -10a351.0 351.0 0 1 0 702.0 0a351.0 351.0 0 1 0 -702.0 0M22 -10a357.5 357.5 0 1 0 715.0 0a357.5 357.5 0 1 0 -715.0 0M16 -10a364.0 364.0 0 1 0 728.0 0a364.0 364.0 0 1 0 -728.0 0M10 -10a370.5 370.5 0 1 0 741.0 0a370.5 370.5 0 1 0 -741.0 0M3 -10a377.0 377.0 0 1 0 754.0 0a377.0 377.0 0 1 0 -754.0 0" fill="none" stroke="#e8ebd8" stroke-width="0.8"/></g>
<g clip-path="url(#lf7)"><ellipse cx="620" cy="270" rx="70" ry="150" transform="rotate(0 620 270)" fill="#f8f8ef"/><path d="M776 300a84.5 84.5 0 1 0 169.0 0a84.5 84.5 0 1 0 -169.0 0M769 300a91.0 91.0 0 1 0 182.0 0a91.0 91.0 0 1 0 -182.0 0M762 300a97.5 97.5 0 1 0 195.0 0a97.5 97.5 0 1 0 -195.0 0M756 300a104.0 104.0 0 1 0 208.0 0a104.0 104.0 0 1 0 -208.0 0M750 300a110.5 110.5 0 1 0 221.0 0a110.5 110.5 0 1 0 -221.0 0M743 300a117.0 117.0 0 1 0 234.0 0a117.0 117.0 0 1 0 -234.0 0M736 300a123.5 123.5 0 1 0 247.0 0a123.5 123.5 0 1 0 -247.0 0M730 300a130.0 130.0 0 1 0 260.0 0a130.0 130.0 0 1 0 -260.0 0M724 300a136.5 136.5 0 1 0 273.0 0a136.5 136.5 0 1 0 -273.0 0M717 300a143.0 143.0 0 1 0 286.0 0a143.0 143.0 0 1 0 -286.0 0M710 300a149.5 149.5 0 1 0 299.0 0a149.5 149.5 0 1 0 -299.0 0M704 300a156.0 156.0 0 1 0 312.0 0a156.0 156.0 0 1 0 -312.0 0M698 300a162.5 162.5 0 1 0 325.0 0a162.5 162.5 0 1 0 -325.0 0M691 300a169.0 169.0 0 1 0 338.0 0a169.0 169.0 0 1 0 -338.0 0M684 300a175.5 175.5 0 1 0 351.0 0a175.5 175.5 0 1 0 -351.0 0M678 300a182.0 182.0 0 1 0 364.0 0a182.0 182.0 0 1 0 -364.0 0M672 300a188.5 188.5 0 1 0 377.0 0a188.5 188.5 0 1 0 -377.0 0M665 300a195.0 195.0 0 1 0 390.0 0a195.0 195.0 0 1 0 -390.0 0M658 300a201.5 201.5 0 1 0 403.0 0a201.5 201.5 0 1 0 -403.0 0M652 300a208.0 208.0 0 1 0 416.0 0a208.0 208.0 0 1 0 -416.0 0M646 300a214.5 214.5 0 1 0 429.0 0a214.5 214.5 0 1 0 -429.0 0M639 300a221.0 221.0 0 1 0 442.0 0a221.0 221.0 0 1 0 -442.0 0M632 300a227.5 227.5 0 1 0 455.0 0a227.5 227.5 0 1 0 -455.0 0M626 300a234.0 234.0 0 1 0 468.0 0a234.0 234.0 0 1 0 -468.0 0M620 300a240.5 240.5 0 1 0 481.0 0a240.5 240.5 0 1 0 -481.0 0M613 300a247.0 247.0 0 1 0 494.0 0a247.0 247.0 0 1 0 -494.0 0M606 300a253.5 253.5 0 1 0 507.0 0a253.5 253.5 0 1 0 -507.0 0M600 300a260.0 260.0 0 1 0 520.0 0a260.0 260.0 0 1 0 -520.0 0M594 300a266.5 266.5 0 1 0 533.0 0a266.5 266.5 0 1 0 -533.0 0M587 300a273.0 273.0 0 1 0 546.0 0a273.0 273.0 0 1 0 -546.0 0M580 300a279.5 279.5 0 1 0 559.0 0a279.5 279.5 0 1 0 -559.0 0M574 300a286.0 286.0 0 1 0 572.0 0a286.0 286.0 0 1 0 -572.0 0M568 300a292.5 292.5 0 1 0 585.0 0a292.5 292.5 0 1 0 -585.0 0M561 300a299.0 299.0 0 1 0 598.0 0a299.0 299.0 0 1 0 -598.0 0M554 300a305.5 305.5 0 1 0 611.0 0a305.5 305.5 0 1 0 -611.0 0M548 300a312.0 312.0 0 1 0 624.0 0a312.0 312.0 0 1 0 -624.0 0M542 300a318.5 318.5 0 1 0 637.0 0a318.5 318.5 0 1 0 -637.0 0M535 300a325.0 325.0 0 1 0 650.0 0a325.0 325.0 0 1 0 -650.0 0M528 300a331.5 331.5 0 1 0 663.0 0a331.5 331.5 0 1 0 -663.0 0M522 300a338.0 338.0 0 1 0 676.0 0a338.0 338.0 0 1 0 -676.0 0M516 300a344.5 344.5 0 1 0 689.0 0a344.5 344.5 0 1 0 -689.0 0M509 300a351.0 351.0 0 1 0 702.0 0a351.0 351.0 0 1 0 -702.0 0M502 300a357.5 357.5 0 1 0 715.0 0a357.5 357.5 0 1 0 -715.0 0M496 300a364.0 364.0 0 1 0 728.0 0a364.0 364.0 0 1 0 -728.0 0M490 300a370.5 370.5 0 1 0 741.0 0a370.5 370.5 0 1 0 -741.0 0M483 300a377.0 377.0 0 1 0 754.0 0a377.0 377.0 0 1 0 -754.0 0M476 300a383.5 383.5 0 1 0 767.0 0a383.5 383.5 0 1 0 -767.0 0M470 300a390.0 390.0 0 1 0 780.0 0a390.0 390.0 0 1 0 -780.0 0M464 300a396.5 396.5 0 1 0 793.0 0a396.5 396.5 0 1 0 -793.0 0" fill="none" stroke="#e8ebd8" stroke-width="0.8"/></g>
<g clip-path="url(#lf8)"><ellipse cx="440" cy="290" rx="110" ry="80" transform="rotate(30 440 290)" fill="#f8f8ef"/><path d="M150 520a149.5 149.5 0 1 0 299.0 0a149.5 149.5 0 1 0 -299.0 0M144 520a156.0 156.0 0 1 0 312.0 0a156.0 156.0 0 1 0 -312.0 0M138 520a162.5 162.5 0 1 0 325.0 0a162.5 162.5 0 1 0 -325.0 0M131 520a169.0 169.0 0 1 0 338.0 0a169.0 169.0 0 1 0 -338.0 0M124 520a175.5 175.5 0 1 0 351.0 0a175.5 175.5 0 1 0 -351.0 0M118 520a182.0 182.0 0 1 0 364.0 0a182.0 182.0 0 1 0 -364.0 0M112 520a188.5 188.5 0 1 0 377.0 0a188.5 188.5 0 1 0 -377.0 0M105 520a195.0 195.0 0 1 0 390.0 0a195.0 195.0 0 1 0 -390.0 0M98 520a201.5 201.5 0 1 0 403.0 0a201.5 201.5 0 1 0 -403.0 0M92 520a208.0 208.0 0 1 0 416.0 0a208.0 208.0 0 1 0 -416.0 0M86 520a214.5 214.5 0 1 0 429.0 0a214.5 214.5 0 1 0 -429.0 0M79 520a221.0 221.0 0 1 0 442.0 0a221.0 221.0 0 1 0 -442.0 0M72 520a227.5 227.5 0 1 0 455.0 0a227.5 227.5 0 1 0 -455.0 0M66 520a234.0 234.0 0 1 0 468.0 0a234.0 234.0 0 1 0 -468.0 0M60 520a240.5 240.5 0 1 0 481.0 0a240.5 240.5 0 1 0 -481.0 0M53 520a247.0 247.0 0 1 0 494.0 0a247.0 247.0 0 1 0 -494.0 0M46 520a253.5 253.5 0 1 0 507.0 0a253.5 253.5 0 1 0 -507.0 0M40 520a260.0 260.0 0 1 0 520.0 0a260.0 260.0 0 1 0 -520.0 0M34 520a266.5 266.5 0 1 0 533.0 0a266.5 266.5 0 1 0 -533.0 0M27 520a273.0 273.0 0 1 0 546.0 0a273.0 273.0 0 1 0 -546.0 0M20 520a279.5 279.5 0 1 0 559.0 0a279.5 279.5 0 1 0 -559.0 0M14 520a286.0 286.0 0 1 0 572.0 0a286.0 286.0 0 1 0 -572.0 0M8 520a292.5 292.5 0 1 0 585.0 0a292.5 292.5 0 1 0 -585.0 0M1 520a299.0 299.0 0 1 0 598.0 0a299.0 299.0 0 1 0 -598.0 0M-6 520a305.5 305.5 0 1 0 611.0 0a305.5 305.5 0 1 0 -611.0 0M-12 520a312.0 312.0 0 1 0 624.0 0a312.0 312.0 0 1 0 -624.0 0M-18 520a318.5 318.5 0 1 0 637.0 0a318.5 318.5 0 1 0 -637.0 0M-25 520a325.0 325.0 0 1 0 650.0 0a325.0 325.0 0 1 0 -650.0 0M-32 520a331.5 331.5 0 1 0 663.0 0a331.5 331.5 0 1 0 -663.0 0M-38 520a338.0 338.0 0 1 0 676.0 0a338.0 338.0 0 1 0 -676.0 0M-44 520a344.5 344.5 0 1 0 689.0 0a344.5 344.5 0 1 0 -689.0 0M-51 520a351.0 351.0 0 1 0 702.0 0a351.0 351.0 0 1 0 -702.0 0M-58 520a357.5 357.5 0 1 0 715.0 0a357.5 357.5 0 1 0 -715.0 0M-64 520a364.0 364.0 0 1 0 728.0 0a364.0 364.0 0 1 0 -728.0 0M-70 520a370.5 370.5 0 1 0 741.0 0a370.5 370.5 0 1 0 -741.0 0M-77 520a377.0 377.0 0 1 0 754.0 0a377.0 377.0 0 1 0 -754.0 0M-84 520a383.5 383.5 0 1 0 767.0 0a383.5 383.5 0 1 0 -767.0 0" fill="none" stroke="#e8ebd8" stroke-width="0.8"/></g>
<g clip-path="url(#lf9)"><ellipse cx="120" cy="120" rx="90" ry="50" transform="rotate(-30 120 120)" fill="#f8f8ef"/><path d="M-104 320a123.5 123.5 0 1 0 247.0 0a123.5 123.5 0 1 0 -247.0 0M-110 320a130.0 130.0 0 1 0 260.0 0a130.0 130.0 0 1 0 -260.0 0M-116 320a136.5 136.5 0 1 0 273.0 0a136.5 136.5 0 1 0 -273.0 0M-123 320a143.0 143.0 0 1 0 286.0 0a143.0 143.0 0 1 0 -286.0 0M-130 320a149.5 149.5 0 1 0 299.0 0a149.5 149.5 0 1 0 -299.0 0M-136 320a156.0 156.0 0 1 0 312.0 0a156.0 156.0 0 1 0 -312.0 0M-142 320a162.5 162.5 0 1 0 325.0 0a162.5 162.5 0 1 0 -325.0 0M-149 320a169.0 169.0 0 1 0 338.0 0a169.0 169.0 0 1 0 -338.0 0M-156 320a175.5 175.5 0 1 0 351.0 0a175.5 175.5 0 1 0 -351.0 0M-162 320a182.0 182.0 0 1 0 364.0 0a182.0 182.0 0 1 0 -364.0 0M-168 320a188.5 188.5 0 1 0 377.0 0a188.5 188.5 0 1 0 -377.0 0M-175 320a195.0 195.0 0 1 0 390.0 0a195.0 195.0 0 1 0 -390.0 0M-182 320a201.5 201.5 0 1 0 403.0 0a201.5 201.5 0 1 0 -403.0 0M-188 320a208.0 208.0 0 1 0 416.0 0a208.0 208.0 0 1 0 -416.0 0M-194 320a214.5 214.5 0 1 0 429.0 0a214.5 214.5 0 1 0 -429.0 0M-201 320a221.0 221.0 0 1 0 442.0 0a221.0 221.0 0 1 0 -442.0 0M-208 320a227.5 227.5 0 1 0 455.0 0a227.5 227.5 0 1 0 -455.0 0M-214 320a234.0 234.0 0 1 0 468.0 0a234.0 234.0 0 1 0 -468.0 0M-220 320a240.5 240.5 0 1 0 481.0 0a240.5 240.5 0 1 0 -481.0 0M-227 320a247.0 247.0 0 1 0 494.0 0a247.0 247.0 0 1 0 -494.0 0M-234 320a253.5 253.5 0 1 0 507.0 0a253.5 253.5 0 1 0 -507.0 0M-240 320a260.0 260.0 0 1 0 520.0 0a260.0 260.0 0 1 0 -520.0 0M-246 320a266.5 266.5 0 1 0 533.0 0a266.5 266.5 0 1 0 -533.0 0M-253 320a273.0 273.0 0 1 0 546.0 0a273.0 273.0 0 1 0 -546.0 0M-260 320a279.5 279.5 0 1 0 559.0 0a279.5 279.5 0 1 0 -559.0 0M-266 320a286.0 286.0 0 1 0 572.0 0a286.0 286.0 0 1 0 -572.0 0M-272 320a292.5 292.5 0 1 0 585.0 0a292.5 292.5 0 1 0 -585.0 0M-279 320a299.0 299.0 0 1 0 598.0 0a299.0 299.0 0 1 0 -598.0 0M-286 320a305.5 305.5 0 1 0 611.0 0a305.5 305.5 0 1 0 -611.0 0M-292 320a312.0 312.0 0 1 0 624.0 0a312.0 312.0 0 1 0 -624.0 0M-298 320a318.5 318.5 0 1 0 637.0 0a318.5 318.5 0 1 0 -637.0 0" fill="none" stroke="#e8ebd8" stroke-width="0.8"/></g>
  <defs><filter id="wc" x="-0.2" y="-0.2" width="1.4" height="1.4"><feGaussianBlur stdDeviation="1.6"/></filter></defs>
  <g filter="url(#wc)">
  <path d="M-5 -5H100Q99 14 92 22Q80 30 62 36Q45 44 30 48Q15 52 -5 56Z" fill="#e6eecb" opacity="0.9"/>
  <path d="M-5 -5H72Q72 12 64 20Q56 27 46 29Q34 31 26 36Q14 42 -5 42Z" fill="#c6dc62"/>
  <path d="M-5 -5H45Q50 8 40 16Q25 22 -5 22Z" fill="#cde066" opacity="0.8"/>
  <path d="M-5 26Q16 24 28 32Q38 36 34 44Q24 50 8 50L-5 52Z" fill="#9ad27e" opacity="0.9"/>
  <path d="M-5 36Q10 36 18 42Q14 50 -5 52Z" fill="#86c87a"/>
  </g>
  <path d="M260 368Q330 356 400 358Q450 356 490 352L490 368Z" fill="#e2edd0" opacity="0.9"/>
  <path d="M455 368Q490 350 530 347Q570 340 600 342Q630 339 652 341V368Z" fill="#c3e2a6"/>
  <path d="M500 350Q540 344 575 346Q610 340 652 342V352Q610 350 570 354Q530 352 500 350Z" fill="#b0d98e" opacity="0.8"/>
  <path d="M475 368Q520 356 565 358Q605 354 652 356V368Z" fill="#9fd27c"/>
 </svg>
 <div class="a nw" style="left:15px;top:33px;font-size:22px;line-height:26px;color:#127c37;-webkit-text-stroke:0.25px #127c37">4.1 生态格局构建思路</div>
 <div class="a nw" style="left:50px;top:77.5px;font-size:12.6px;line-height:14px;color:#222">2. 构建思路</div>
 <div class="bl" style="left:50px;top:95.5px;width:547px">基于生态安全格局的理念，从生态系统服务功能重要性和生态敏感性角度分析生态源地的适宜性水平；采用林业部门恩施</div>
 <div class="bl" style="left:50px;top:110px;width:544px">州第二森林资源清查数据认定林斑，采用多目标决策模型确定生态斑块的廊道适宜性特征；运用ArcGIS运算最小累积阻</div>
 <div class="bl" style="left:50px;top:124.5px;width:551px">力模型生成生态廊道，并通过中心度分析识别出重要的生态斑块和生态廊道，从而构建出生态安全格局，为恩施州城市可</div>
 <div class="bl" style="left:50px;top:139px;width:337px">持续利用提供理论依据和支撑，同时为其他城市生态系统建设提供参考。</div>
 <div class="a nw" style="left:50px;top:275px;font-size:12.6px;line-height:14px;color:#222">3. 采用数据</div>
 <div class="bl" style="left:50px;top:291.5px;width:548px">高程和坡度数据来自于地理空间数据云2017年30m分辨率栅格的GDEMDEM空间数据集；土地利用数据、净第一性生产</div>
 <div class="bl" style="left:50px;top:306px;width:544px">力（NPP）数据、归一化植被指数（NDVI）数据、土壤数据、不透水表面指数数据均由前期“双评价”工作整理传化为</div>
 <div class="bl" style="left:50px;top:320.5px;width:547px">评价成果加以利用；自然保护地数据来自于恩施州林业局自然保护地划定方案，并进行整理；行政区划及其他基础地理数</div>
 <div class="bl" style="left:50px;top:335px;width:538px">据来自于恩施州第三次国土利用调查（“三调”）。研究数据统一坐标系为国家大地2000坐标系（CGCS2000）。</div>
 <!-- right tab -->
 <div class="a" style="left:642px;top:173px;width:10px;height:23px;background:#6e6e69;border-radius:3px 0 0 3px"></div>
 <svg class="a" style="left:644px;top:180px" width="6" height="9"><path d="M1.5 1l3 3.5-3 3.5" stroke="#ccc" stroke-width="0.9" fill="none"/></svg>
</div>
<!-- maps -->
<div class="a" style="left:179px;top:252px;width:148px;height:110px;background:#fff"></div>
<svg class="a" style="left:179px;top:252px" width="260" height="125" viewBox="179 252 260 125">
 <rect x="200.5" y="254.5" width="127" height="99.5" fill="#fff" stroke="#8a8a8a" stroke-width="0.7"/>
 <path d="M233 259L240 256L256 258L262 262L270 268L285 271L295 274L310 278L322 285L323 292L318 299L311 306L307 313L304 322L303 331L300 340L288 346L278 343L272 340L262 335L256 333L245 333L233 333L222 332L214 328L210 318L208 302L210 292L212 283L218 277L224 273L230 266Z" fill="#fff" stroke="#8c8c8c" stroke-width="0.6"/>
 <path d="M224 273L236 284L256 284M210 300L232 304L250 300M236 284L244 300L256 333M272 270L268 290L290 302M295 274L292 290L310 300M256 284L262 305L272 340M214 320L236 318M262 262L266 280M300 340L290 325L304 322M222 332L232 318" stroke="#c4c4c4" stroke-width="0.45" fill="none"/>
 <path d="M272 308L295 306L299 314L291 327L274 325L270 315Z" fill="#7fb6de" stroke="#5a90c0" stroke-width="0.4"/>
 <path d="M253 287L259 287L261 296L253 302L249 298Z" fill="#7fb6de"/>
 <path d="M286 329L303 329L301 338.6L287.5 336.7Z" fill="#7fb6de"/>
 <path d="M266 289L272 290L270 294Z" fill="#7fb6de"/><path d="M238 271L244 270L242 276Z" fill="#7fb6de"/>
 <rect x="281" y="301" width="1.6" height="1.6" fill="#2a3a8a"/><rect x="277" y="336" width="1.6" height="1.6" fill="#2a3a8a"/><rect x="294" y="281" width="1.6" height="1.6" fill="#2a3a8a"/>
 <path d="M238 262L240 290L232 320L236 335M245 258L262 266L272 275L292 275L318 282M214 318L240 318L266 312L280 306L300 300M255 300L270 318L275 330L280 346M296 276L302 290L300 320L290 340M225 305L255 298M262 266L264 290L258 310" stroke="#e0a24a" stroke-width="0.7" fill="none"/>
 <path d="M224 274L236 280L250 280L262 284L270 288L283 292L296 288L312 284L320 283M212 282L218 300L214 312L219 325L230 330L248 327L262 320L272 314M236 280L244 300L250 312L262 316L276 306L290 300L306 296L316 290M296 288L300 310L305 316L322 314M283 292L285 310L290 318M224 310L236 308L250 312M248 327L262 332" stroke="#1e7a3a" stroke-width="0.9" fill="none"/>
 <path d="M248 262L244 300L238 335M254 262L250 300L246 330M272 325L278 340L282 348" stroke="#333" stroke-width="0.55" stroke-dasharray="2 1.2" fill="none"/>
 <g fill="#e02a4a"><circle cx="224" cy="274" r="1.2"/><circle cx="236" cy="280" r="1.2"/><circle cx="250" cy="280" r="1.2"/><circle cx="262" cy="284" r="1.3"/><circle cx="270" cy="288" r="1.3"/><circle cx="283" cy="292" r="1.3"/><circle cx="296" cy="288" r="1.2"/><circle cx="312" cy="284" r="1.3"/><circle cx="290" cy="300" r="1.3"/><circle cx="276" cy="306" r="1.3"/><circle cx="250" cy="312" r="1.2"/><circle cx="244" cy="300" r="1.2"/><circle cx="218" cy="300" r="1.2"/><circle cx="214" cy="312" r="1.2"/><circle cx="230" cy="330" r="1.2"/><circle cx="248" cy="327" r="1.2"/><circle cx="305" cy="316" r="1.2"/><circle cx="262" cy="316" r="1.2"/><circle cx="306" cy="296" r="1.2"/><circle cx="285" cy="310" r="1.2"/><circle cx="224" cy="310" r="1.2"/><circle cx="320" cy="283" r="1.1"/></g>
 <g font-family="Liberation Sans" font-size="3" fill="#333">
  <circle cx="204" cy="334" r="1" fill="#b03a8a"/><text x="207" y="335">生态节点</text>
  <path d="M203 339.5L204.2 337.5L205.4 339.5Z" fill="#e02a4a"/><text x="207" y="339.5">生态断裂点 — 铁路</text>
  <path d="M202.5 343h4" stroke="#1e7a3a" stroke-width="0.8"/><text x="207" y="344">生态廊道</text><rect x="226" y="341.5" width="3" height="3" fill="#2a3a8a"/><text x="231" y="344">自然地</text>
  <path d="M202.5 347.5h4" stroke="#e0a24a" stroke-width="0.8"/><text x="207" y="348.5">高速公路</text><rect x="226" y="346" width="3" height="3" fill="#7fb6de"/><text x="231" y="348.5">生态源地</text>
  <text x="188" y="276" font-size="2.6">30°00'</text><text x="188" y="322" font-size="2.6">30°00'</text>
  <text x="225" y="358" font-size="2.6">109°30'</text><text x="288" y="358" font-size="2.6">110°00'</text><text x="258" y="362" font-size="2.6">东经</text>
  <text x="184" y="300" font-size="2.6" transform="rotate(-90 184 300)">北纬</text>
  <text x="318" y="264" font-size="3.5">N</text><path d="M318 270L320 264L322 270" stroke="#222" stroke-width="0.8" fill="none"/>
 </g>
 <rect x="336" y="254.5" width="93" height="100.5" fill="#fff" stroke="#bbb" stroke-width="0.6"/>
 <path d="M344.5 261.6L350.2 257.7L358.9 259.6L368.5 263.5L376.2 271.2L380.1 275L387.8 276L403.2 273.1L407.1 280.8L412.9 285.6L425.4 284.7L422.5 294.3L414.8 305.9L409 317.4L403.2 327.1L393.6 330.9L389.7 340.6L387.8 348.3L380.1 352.1L368.5 348.3L358.9 344.4L347.3 340.6L339.6 331L338.7 327.1L344.5 321.3L348.3 313.6L353.1 305.9L357 298.2L353.1 288.5L349.3 280.8L343.5 273.1L342.5 267.3Z" fill="#fff" stroke="#808080" stroke-width="0.5"/>
 <path d="M357 302Q378 296 397.4 300M347.3 317.4Q368.5 321.3 391.7 327M380.1 275Q393.6 282 393.6 300Q395 310 403 315.5M357 298Q368.5 292 386 292.4" stroke="#8a8a8a" stroke-width="0.45" fill="none"/>
 <rect x="354" y="300" width="4" height="6" fill="#cfcfcf"/><rect x="398" y="296" width="3" height="3" fill="#999"/>
</svg>
<div class="a nw" style="left:265px;top:365px;font-size:8.4px;line-height:10px;color:#111">最小阻力法构建生态廊道示意图</div>
<div class="a nw" style="left:345px;top:300px;font-size:13px;color:rgba(180,180,180,0.35);transform:rotate(-55deg);transform-origin:0 0;letter-spacing:0.5px">+8618927693386</div>
<div class="a nw" style="left:370px;top:275px;font-size:13px;color:rgba(180,180,180,0.35);transform:rotate(-55deg);transform-origin:0 0">Jing</div>
<svg class="a" style="left:599px;top:296px" width="8" height="10"><path d="M1 1L1 8L3 6.2L4.5 9L5.8 8.4L4.4 5.6L7 5.6Z" fill="#f4f4f4" stroke="#9a9a9a" stroke-width="0.6"/></svg>
<!-- slide list btn -->
<div class="a" style="left:0;top:450px;width:22px;height:17px;background:rgba(0,0,0,0.35);border-radius:0 4px 4px 0"></div>
<svg class="a" style="left:5px;top:454px" width="12" height="9"><path d="M4 1.5h6M5 4.5h5M4 7.5h6" stroke="#f0f0f0" stroke-width="1"/><path d="M1.5 1.5h1M2.5 4.5h1M1.5 7.5h1" stroke="#e6e6e6" stroke-width="1"/></svg>
<!-- ===== video column ===== -->
<div class="a" style="left:652px;top:36px;width:141px;height:477px;background:linear-gradient(90deg,#4a4d51 0,#3a3c40 50%,#111 100%)"></div>
<div class="a" style="left:652px;top:36px;width:6px;height:477px;background:linear-gradient(180deg,#505357 0,#46494d 100%)"></div>
<div class="a" style="left:787px;top:36px;width:6px;height:477px;background:#050505"></div>
<div class="a" style="left:653px;top:273px;width:2px;height:14px;background:#7a7d82;border-radius:1px"></div>
<!-- gaps -->
<div class="a" style="left:658px;top:119px;width:129px;height:7px;background:linear-gradient(90deg,#3d4044,#2a2c2f 60%,#0d0d0e)"></div>
<div class="a" style="left:658px;top:198px;width:129px;height:7px;background:linear-gradient(90deg,#3d4044,#2a2c2f 60%,#0d0d0e)"></div>
<div class="a" style="left:658px;top:276px;width:129px;height:7px;background:linear-gradient(90deg,#3d4044,#2a2c2f 60%,#0d0d0e)"></div>
<div class="a" style="left:658px;top:355px;width:129px;height:7px;background:linear-gradient(90deg,#3d4044,#2a2c2f 60%,#0d0d0e)"></div>
<div class="a" style="left:658px;top:433px;width:129px;height:7px;background:linear-gradient(90deg,#3d4044,#2a2c2f 60%,#0d0d0e)"></div>
<!-- tile 1 camera -->
<div class="tile" style="top:48px;height:71px;overflow:hidden;background:#9aa3a8">
 <svg class="a" style="left:0;top:0" width="129" height="71" viewBox="0 0 129 71">
  <defs><linearGradient id="door" x1="0" x2="1"><stop offset="0" stop-color="#5a281c"/><stop offset="0.5" stop-color="#7a3b28"/><stop offset="1" stop-color="#5e2c1e"/></linearGradient>
  <radialGradient id="face" cx="0.5" cy="0.45" r="0.6"><stop offset="0" stop-color="#d2ab96"/><stop offset="0.7" stop-color="#bf927c"/><stop offset="1" stop-color="#a47866"/></radialGradient></defs>
  <rect x="0" y="0" width="129" height="71" fill="#b9bfc2"/>
  <rect x="0" y="0" width="39" height="71" fill="#b2bac0"/>
  <rect x="20" y="0" width="109" height="8" fill="#8e9194"/>
  <rect x="39" y="8" width="90" height="3" fill="#c4c7c9"/>
  <rect x="39" y="11" width="90" height="2" fill="#7f8386"/>
  <rect x="39" y="13" width="16" height="58" fill="#c5c9cc"/>
  <rect x="40" y="14" width="1" height="57" fill="#6e7275"/>
  <rect x="104" y="11" width="25" height="60" fill="url(#door)"/>
  <rect x="0" y="38" width="8" height="33" fill="#d3d4d3"/>
  <rect x="0" y="38" width="8" height="2" fill="#8a8d8e"/>
  <path d="M39 71Q44 54 62 50L98 50Q118 54 127 71Z" fill="#c9bde0"/>
  <path d="M52 40Q50 8 79 3Q108 8 106 40L104 52L54 52Z" fill="#2b2624"/>
  <path d="M56 28Q56 6 79 6Q102 6 102 28L103 48Q101 68 79 72Q57 68 55 48Z" fill="url(#face)"/>
  <path d="M60 14Q66 7 79 7Q92 7 98 14Q90 10 79 10Q68 10 60 14Z" fill="#3a302c" opacity="0.5"/>
  <path d="M58 38Q65 35 73 38L72 42Q65 44 58 42Z" fill="none" stroke="#5a4a44" stroke-width="0.7"/>
  <path d="M85 38Q93 35 100 38L100 42Q93 44 85 42Z" fill="none" stroke="#5a4a44" stroke-width="0.7"/>
  <path d="M60 39.5h10M88 39.5h10" stroke="#4a3a34" stroke-width="1.2"/>
  <path d="M73 39Q79 37 85 39" stroke="#5a4a44" stroke-width="0.7" fill="none"/>
  <path d="M60 32Q66 30 72 32M87 32Q93 30 98 32" stroke="#6a5048" stroke-width="1" fill="none"/>
  <ellipse cx="79" cy="50" rx="5" ry="4.5" fill="#c89a86"/>
  <path d="M71 60Q79 62 87 60" stroke="#6a4a40" stroke-width="1.2" fill="none"/>
 </svg>
 <div class="lab" style="width:129px;height:13px;background:rgba(30,32,36,0.82)">
  <div class="a" style="left:0;top:0;width:12px;height:13px;background:#1a6ff5"></div>
  <svg class="a" style="left:1px;top:2px" width="10" height="10"><circle cx="5" cy="3.2" r="2.2" fill="#fff"/><path d="M1 9.5Q1 6 5 6Q9 6 9 9.5Z" fill="#fff"/></svg>
  <svg class="a" style="left:17px;top:1.5px" width="8" height="10"><rect x="2.5" y="0.5" width="3" height="5.5" rx="1.5" fill="#e6e6e6"/><path d="M1.2 4.5Q1.2 7.5 4 7.5Q6.8 7.5 6.8 4.5M4 7.5V9.5M2.2 9.5h3.6" stroke="#e6e6e6" stroke-width="0.8" fill="none"/></svg>
  <span class="a" style="left:27px;top:0;width:100px;overflow:hidden;white-space:nowrap;line-height:13px;font-size:7.4px">韩晗-中国地质大学 (武汉) 资产...</span>
 </div>
</div>
<div class="a" style="left:703px;top:42px;width:42px;height:11px;background:rgba(20,22,25,0.45);border-radius:2px"></div>
<svg class="a" style="left:719px;top:45px" width="10" height="6"><path d="M1 5l4-4 4 4" stroke="#ccc" stroke-width="0.9" fill="none"/></svg>
<!-- tile 2 -->
<div class="tile" style="top:126px;height:72px">
 <div class="av" style="left:46px;top:13px;width:36px;height:36px;background:#0d0d0d">
  <svg width="36" height="36"><path d="M11.8 3.5L33.8 10.6L24.4 31.5L1.9 24.4Z" fill="#4d8fa2"/><path d="M11.8 3.5L33.8 10.6L33 12.5L11.5 5.5Z" fill="#7ab8c4"/><path d="M17 15L19 9L20.5 13L23 8.5L24.5 16L22 19" stroke="#d8582e" stroke-width="1.5" fill="none"/><path d="M18 12L21 19" stroke="#9a2a3a" stroke-width="0.8"/><path d="M4 24Q8 26 12 25Q16 28 20 28Q23 30 26 30" stroke="#e87a30" stroke-width="2.2" fill="none" stroke-dasharray="2.5 1"/></svg>
 </div>
 <div class="lab" style="width:43px;height:12px">
  <div class="a" style="left:0;top:0;width:12px;height:12px;background:#f28a18"></div>
  <svg class="a" style="left:1px;top:1px" width="10" height="10"><circle cx="5" cy="3.2" r="2.2" fill="#fff"/><path d="M1 9.5Q1 6 5 6Q9 6 9 9.5Z" fill="#fff"/></svg>
  <svg class="a" style="left:16px;top:1px" width="8" height="10"><rect x="2.5" y="0.5" width="3" height="5.5" rx="1.5" fill="#e6e6e6"/><path d="M1.2 4.5Q1.2 7.5 4 7.5Q6.8 7.5 6.8 4.5M4 7.5V9.5M2.2 9.5h3.6" stroke="#e6e6e6" stroke-width="0.8" fill="none"/></svg>
  <span class="a" style="left:27px;top:0">楠柒</span>
 </div>
</div>
<!-- tile 3 -->
<div class="tile" style="top:205px;height:71px">
 <div class="av" style="left:46px;top:13px;width:36px;height:36px;background:radial-gradient(circle at 45% 50%,#f3e3c4 0,#e2c08a 45%,#c99760 100%)">
  <svg width="36" height="36"><path d="M6 14Q12 8 18 12M8 20Q14 16 20 20M10 26Q16 22 22 27M14 10L16 28M20 12L22 26" stroke="#c99a5a" stroke-width="0.9" fill="none" opacity="0.8"/><path d="M4 18Q10 14 14 20Q12 26 6 24Z" fill="#f1d7a6" opacity="0.8"/><path d="M28 6L35 11L31 15Z" fill="#7a2e14"/><path d="M24 24h6v5h-6z" fill="#c89858" opacity="0.7"/></svg>
 </div>
 <div class="lab" style="width:29px;height:12px">
  <svg class="a" style="left:2px;top:1px" width="10" height="10"><rect x="3.5" y="0.5" width="3" height="5.5" rx="1.5" fill="#e6e6e6"/><path d="M2.2 4.5Q2.2 7.5 5 7.5Q7.8 7.5 7.8 4.5M5 7.5V9.5" stroke="#e6e6e6" stroke-width="0.8" fill="none"/><path d="M1 9L9 1.5" stroke="#e8453c" stroke-width="1"/></svg>
  <span class="a" style="left:15px;top:0">杨俊</span>
 </div>
</div>
<!-- tile 4 -->
<div class="tile" style="top:283px;height:72px">
 <div class="av" style="left:46px;top:13px;width:36px;height:36px;background:radial-gradient(circle at 50% 50%,#6d6f73 0,#4b4d50 60%,#8a8c8f 100%)">
  <svg width="36" height="36"><rect width="36" height="36" fill="#62676e"/><ellipse cx="9.6" cy="19.4" rx="1.9" ry="1.3" fill="#707680" opacity="0.8"/><ellipse cx="17.2" cy="20.6" rx="2.5" ry="1.8" fill="#3c4046" opacity="0.8"/><ellipse cx="10.3" cy="9.5" rx="3.5" ry="2.4" fill="#3c4046" opacity="0.8"/><ellipse cx="19.3" cy="19.6" rx="2.0" ry="1.4" fill="#50555c" opacity="0.8"/><ellipse cx="9.4" cy="6.9" rx="3.3" ry="2.3" fill="#3c4046" opacity="0.8"/><ellipse cx="25.7" cy="23.5" rx="1.2" ry="0.8" fill="#707680" opacity="0.8"/><ellipse cx="3.4" cy="27.0" rx="3.1" ry="2.1" fill="#a8adb4" opacity="0.8"/><ellipse cx="17.1" cy="25.0" rx="3.2" ry="2.2" fill="#c0c4ca" opacity="0.8"/><ellipse cx="27.2" cy="15.7" rx="2.8" ry="2.0" fill="#707680" opacity="0.8"/><ellipse cx="16.2" cy="31.9" rx="3.2" ry="2.2" fill="#8a9098" opacity="0.8"/><ellipse cx="3.1" cy="17.8" rx="1.6" ry="1.2" fill="#c0c4ca" opacity="0.8"/><ellipse cx="16.0" cy="22.1" rx="1.8" ry="1.2" fill="#707680" opacity="0.8"/><ellipse cx="28.7" cy="20.4" rx="2.3" ry="1.6" fill="#3c4046" opacity="0.8"/><ellipse cx="20.7" cy="30.9" rx="2.7" ry="1.9" fill="#8a9098" opacity="0.8"/><ellipse cx="29.4" cy="33.7" rx="2.7" ry="1.9" fill="#50555c" opacity="0.8"/><ellipse cx="24.4" cy="12.4" rx="2.4" ry="1.6" fill="#707680" opacity="0.8"/><ellipse cx="20.2" cy="24.8" rx="1.5" ry="1.1" fill="#707680" opacity="0.8"/><ellipse cx="10.5" cy="6.0" rx="2.2" ry="1.5" fill="#c0c4ca" opacity="0.8"/><ellipse cx="33.7" cy="4.8" rx="3.0" ry="2.1" fill="#3c4046" opacity="0.8"/><ellipse cx="30.7" cy="2.6" rx="2.1" ry="1.4" fill="#3c4046" opacity="0.8"/><ellipse cx="29.9" cy="3.4" rx="2.5" ry="1.8" fill="#8a9098" opacity="0.8"/><ellipse cx="14.1" cy="20.8" rx="2.4" ry="1.7" fill="#a8adb4" opacity="0.8"/><ellipse cx="18.2" cy="34.0" rx="1.8" ry="1.2" fill="#8a9098" opacity="0.8"/><ellipse cx="5.5" cy="19.1" rx="3.4" ry="2.4" fill="#3c4046" opacity="0.8"/><ellipse cx="11.3" cy="10.4" rx="2.7" ry="1.9" fill="#a8adb4" opacity="0.8"/><ellipse cx="12.0" cy="32.7" rx="3.2" ry="2.3" fill="#3c4046" opacity="0.8"/><ellipse cx="14.1" cy="29.8" rx="2.0" ry="1.4" fill="#707680" opacity="0.8"/><ellipse cx="23.8" cy="5.3" rx="3.4" ry="2.4" fill="#707680" opacity="0.8"/><ellipse cx="10.7" cy="22.3" rx="2.8" ry="2.0" fill="#a8adb4" opacity="0.8"/><ellipse cx="16.0" cy="10.3" rx="1.8" ry="1.2" fill="#a8adb4" opacity="0.8"/><ellipse cx="2.4" cy="15.3" rx="2.4" ry="1.7" fill="#8a9098" opacity="0.8"/><ellipse cx="14.0" cy="20.9" rx="1.3" ry="0.9" fill="#c0c4ca" opacity="0.8"/><ellipse cx="22.1" cy="16.9" rx="2.7" ry="1.9" fill="#a8adb4" opacity="0.8"/><ellipse cx="21.5" cy="10.9" rx="2.2" ry="1.6" fill="#707680" opacity="0.8"/><ellipse cx="3.9" cy="23.6" rx="3.4" ry="2.4" fill="#a8adb4" opacity="0.8"/><ellipse cx="22.1" cy="11.6" rx="2.5" ry="1.8" fill="#50555c" opacity="0.8"/><ellipse cx="13.6" cy="12.0" rx="1.9" ry="1.3" fill="#707680" opacity="0.8"/><ellipse cx="10.5" cy="27.2" rx="1.3" ry="0.9" fill="#8a9098" opacity="0.8"/><ellipse cx="33.1" cy="23.9" rx="1.3" ry="0.9" fill="#707680" opacity="0.8"/><ellipse cx="9.1" cy="27.7" rx="1.6" ry="1.1" fill="#50555c" opacity="0.8"/><path d="M2 20L34 16" stroke="#2a2d31" stroke-width="2" opacity="0.7"/><path d="M26 18L36 22" stroke="#c8c8c8" stroke-width="1.2"/><path d="M15 19Q18 17 20 15M20 15L21 12M20 15L22 21L21 25M20 15L24 17" stroke="#e4a450" stroke-width="1.8" fill="none" stroke-linecap="round"/></svg>
 </div>
 <div class="lab" style="width:29px;height:12px">
  <svg class="a" style="left:2px;top:1px" width="10" height="10"><rect x="3.5" y="0.5" width="3" height="5.5" rx="1.5" fill="#e6e6e6"/><path d="M2.2 4.5Q2.2 7.5 5 7.5Q7.8 7.5 7.8 4.5M5 7.5V9.5" stroke="#e6e6e6" stroke-width="0.8" fill="none"/><path d="M1 9L9 1.5" stroke="#e8453c" stroke-width="1"/></svg>
  <span class="a" style="left:15px;top:0">李飞</span>
 </div>
</div>
<!-- tile 5 -->
<div class="tile" style="top:362px;height:71px">
 <div class="av" style="left:46px;top:13px;width:36px;height:36px;background:linear-gradient(180deg,#3a78c8 0,#7fb2e6 55%,#2a4a6a 62%,#3b3a38 80%,#c9a774 100%)">
  <svg width="36" height="36"><circle cx="19" cy="12" r="3" fill="#222"/><path d="M14 28Q14 16 19 15Q24 16 24 28Z" fill="#d7d2c6"/><path d="M10 36Q14 26 26 26Q32 30 30 36Z" fill="#c9a774"/></svg>
 </div>
 <div class="lab" style="width:39px;height:12px">
  <svg class="a" style="left:2px;top:1px" width="10" height="10"><rect x="3.5" y="0.5" width="3" height="5.5" rx="1.5" fill="#e6e6e6"/><path d="M2.2 4.5Q2.2 7.5 5 7.5Q7.8 7.5 7.8 4.5M5 7.5V9.5" stroke="#e6e6e6" stroke-width="0.8" fill="none"/><path d="M1 9L9 1.5" stroke="#e8453c" stroke-width="1"/></svg>
  <span class="a" style="left:15px;top:0">冯晴春</span>
 </div>
</div>
<!-- tile 6 -->
<div class="tile" style="top:440px;height:73px">
 <div class="av" style="left:46px;top:14px;width:36px;height:36px;background:#0a6cff;color:#fff;font-size:11px;line-height:36px;text-align:center">L</div>
 <div class="a" style="left:45px;top:53px;width:43px;height:12px;background:#1b1c1e"></div>
 <svg class="a" style="left:62px;top:56px" width="10" height="6"><path d="M1 1l4 4 4-4" stroke="#ddd" stroke-width="1" fill="none"/></svg>
 <div class="lab" style="width:30px;height:13px">
  <svg class="a" style="left:2px;top:1.5px" width="10" height="10"><rect x="3.5" y="0.5" width="3" height="5.5" rx="1.5" fill="#e6e6e6"/><path d="M2.2 4.5Q2.2 7.5 5 7.5Q7.8 7.5 7.8 4.5M5 7.5V9.5" stroke="#e6e6e6" stroke-width="0.8" fill="none"/><path d="M1 9L9 1.5" stroke="#e8453c" stroke-width="1"/></svg>
  <span class="a" style="left:15px;top:0;line-height:13px">LHH</span>
 </div>
</div>
<!-- speaking popup -->
<div class="a" style="left:648px;top:441px;width:151px;height:21px;background:#2b2d30;z-index:5"></div>
<div class="a nw" style="left:655px;top:446px;font-size:7.4px;line-height:11px;color:#e6e6e6;z-index:6">正在讲话:</div>
<svg class="a" style="left:763px;top:444px;z-index:6" width="30" height="16"><path d="M2 8L8 2L14 8L8 14Z" fill="#3f4145"/><path d="M11 8L17 2L23 8L17 14Z" fill="#46484c"/><path d="M17 8L22 3L28 8L22 13Z" fill="#4c4e52"/></svg>
<!-- ===== right panel ===== -->
<div class="a" style="left:793px;top:36px;width:220px;height:506px;background:#fff"></div>
<div class="a" style="left:793px;top:506px;width:220px;height:1px;background:#e6e7ea"></div>
<div class="a" style="left:793px;top:506px;width:1px;height:36px;background:#e6e7ea"></div>
<!-- self -->
<div class="av" style="left:804px;top:45px;width:18px;height:18px;background:#f6eeee">
 <svg width="18" height="18"><path d="M3.5 7Q4 1.5 9 1.5Q13.5 1.5 14 7Z" fill="#f2b53a"/><path d="M4 8Q4 4.5 9 4.5Q14 4.5 14 8L14 11Q13 8 9 8Q5 8 4 11Z" fill="#2a2a2a"/><ellipse cx="9" cy="10" rx="4" ry="3.6" fill="#fbe0c8"/><circle cx="7.5" cy="10" r="0.5" fill="#222"/><circle cx="10.5" cy="10" r="0.5" fill="#222"/><path d="M4 18Q4 13.5 9 13.5Q13 13.5 13 18Z" fill="#4aa3d8"/><path d="M11 12L17 10.5L17.5 17L12 18Z" fill="#e8643a"/><path d="M12.5 13h3.5M12.8 15h3.2" stroke="#f8d0b0" stroke-width="0.5"/></svg>
</div>
<div class="a nw" style="left:828px;top:44px;font-size:7.4px;line-height:10px;color:#222">王静媛 管科</div>
<div class="a nw" style="left:828px;top:54px;font-size:7.4px;line-height:10px;color:#6a6a6a">(我, 观众)</div>
<div class="a" style="left:828px;top:67px;width:185px;height:1px;background:#f0f1f3"></div>
<div class="a nw" style="left:803px;top:69.5px;font-size:7.4px;line-height:10px;color:#6e7480">嘉宾席(8人)</div>
<!-- rows -->
<div class="prow" style="top:82px">
 <div class="av" style="left:11px;top:4px;width:18px;height:18px;background:#0d0d0d"><svg width="18" height="18"><path d="M2.5 5L12 1.5L16 12.5L6 16.5Z" fill="#3b7f98"/><path d="M6 16.5L16 12.5L16.5 14L6.5 17.5Z" fill="#22485a"/><path d="M7 9.5L8.5 5.5L10 8.5L11.5 5" stroke="#d2502e" stroke-width="1" fill="none"/><path d="M6 12.5h6" stroke="#d86a2a" stroke-width="0.8"/></svg></div>
 <div class="pn" style="top:3px">楠柒</div><div class="ps" style="top:13.5px">(主持人)</div>
</div>
<div class="prow" style="top:108px">
 <div class="av" style="left:11px;top:4px;width:18px;height:18px;background:#d9c0a8"><svg width="18" height="18"><ellipse cx="9" cy="9" rx="7" ry="8" fill="#f0dcc4"/><path d="M5 8Q6 7 7.5 8M10.5 8Q12 7 13 8" stroke="#6a5a4a" stroke-width="0.6" fill="none"/><circle cx="6.5" cy="9" r="0.7" fill="#333"/><circle cx="11.5" cy="9" r="0.7" fill="#333"/><path d="M6.5 13Q9 14.5 11.5 13" stroke="#8a5a4a" stroke-width="0.7" fill="none"/><path d="M2 12Q4 17 9 17Q14 17 16 12" stroke="#c8a888" stroke-width="0.8" fill="none"/></svg></div>
 <div class="pn" style="top:3px">韩晗-中国地质大学（武汉）资产集团</div><div class="ps" style="top:13.5px">(联席主持人)</div>
</div>
<div class="prow" style="top:135px">
 <div class="av" style="left:11px;top:4px;width:18px;height:18px;background:linear-gradient(180deg,#3a78c8 0,#8fc0ea 55%,#2a4a6a 62%,#3b3a38 80%,#c9a774 100%)"><svg width="18" height="18"><circle cx="9.5" cy="6" r="1.5" fill="#222"/><path d="M7.5 14Q7.5 8 9.5 7.5Q11.5 8 11.5 14Z" fill="#e0dcd0"/></svg></div>
 <div class="pn" style="top:3px">冯晴春</div><div class="ps" style="top:13.5px">(嘉宾)</div>
</div>
<div class="prow" style="top:161px">
 <div class="av" style="left:11px;top:4px;width:18px;height:18px;background:#f7f1e4;border:1px solid #eee"><svg width="16" height="16"><path d="M6 3Q10 1 12 5Q11 9 7 8Z" fill="#c66a4a"/><path d="M4 10Q8 9 10 13" stroke="#7ab06a" stroke-width="1" fill="none"/></svg></div>
 <div class="pn" style="top:3px">尘</div><div class="ps" style="top:13.5px">(嘉宾)</div>
</div>
<div class="prow" style="top:187px">
 <div class="av" style="left:11px;top:4px;width:18px;height:18px;background:radial-gradient(circle,#6d6f73 0,#3f4144 70%,#8a8c8f 100%)"><svg width="18" height="18"><path d="M7 7L9 10L12 9" stroke="#e49b3c" stroke-width="1.2" fill="none"/></svg></div>
 <div class="pn" style="top:3px">李飞</div><div class="ps" style="top:13.5px">(嘉宾)</div>
</div>
<div class="prow" style="top:213px">
 <div class="av" style="left:11px;top:4px;width:18px;height:18px;background:#fff;border:1px solid #f0f0f0"><svg width="16" height="16"><path d="M2 10Q3 4 8 5Q13 3 14 9" stroke="#e04a7a" stroke-width="0.8" fill="none"/><path d="M3 12h6" stroke="#3a6ac8" stroke-width="1"/><path d="M12 6V13" stroke="#4aa06a" stroke-width="0.8"/></svg></div>
 <div class="pn" style="top:3px">阮宏梓</div><div class="ps" style="top:13.5px">(嘉宾)</div>
</div>
<div class="prow" style="top:240px">
 <div class="av" style="left:11px;top:4px;width:18px;height:18px;background:radial-gradient(circle at 45% 50%,#f3e3c4 0,#e2c08a 45%,#a97a48 100%)"></div>
 <div class="pn" style="top:3px">杨俊</div><div class="ps" style="top:13.5px">(嘉宾)</div>
</div>
<div class="prow" style="top:266px">
 <div class="av" style="left:11px;top:4px;width:18px;height:18px;background:#0a6cff;color:#fff;font-size:7px;line-height:18px;text-align:center">L</div>
 <div class="pn" style="top:3px">LHH</div><div class="ps" style="top:13.5px">(嘉宾)</div>
</div>
<div class="a nw" style="left:803px;top:293px;font-size:7.4px;line-height:10px;color:#6e7480">与其他29名观众</div>
<!-- row icons -->
<svg class="a" style="left:793px;top:82px" width="220" height="210">
 <defs>
  <g id="mic"><rect x="1.5" y="0" width="3.4" height="6.5" rx="1.7" fill="#c9cace"/><path d="M0.5 4.5Q0.5 8 3.2 8Q5.9 8 5.9 4.5M3.2 8V9.8M1.5 9.8h3.4" stroke="#c9cace" stroke-width="0.8" fill="none"/></g>
  <g id="cam"><rect x="0" y="1" width="6" height="6" fill="#c9cace"/><path d="M6 3.5L9 1.5V6.5L6 4.5Z" fill="#c9cace"/></g>
  <g id="scr"><rect x="0" y="0" width="7" height="5.5" fill="#c9cace"/><path d="M2 7.5h3M3.5 5.5V7.5" stroke="#c9cace" stroke-width="0.8"/></g>
  <path id="sl" d="M0 10L9 0" stroke="#f0605a" stroke-width="0.9"/>
 </defs>
 <!-- row1 y center 12.7 -->
 <use href="#mic" x="193" y="8"/><use href="#cam" x="206" y="9"/><use href="#sl" x="205.5" y="8.5" transform="scale(1,1)"/>
 <!-- row2 center 39 -->
 <use href="#scr" x="178" y="35"/><use href="#mic" x="193" y="34"/><use href="#cam" x="206" y="35"/>
 <!-- row3 65.3 -->
 <use href="#mic" x="193" y="60.5"/><use href="#sl" x="192" y="60.5"/><use href="#cam" x="206" y="61.5"/><use href="#sl" x="205.5" y="61"/>
 <use href="#mic" x="193" y="87"/><use href="#sl" x="192" y="87"/><use href="#cam" x="206" y="88"/><use href="#sl" x="205.5" y="87.5"/>
 <use href="#mic" x="193" y="113"/><use href="#sl" x="192" y="113"/><use href="#cam" x="206" y="114"/><use href="#sl" x="205.5" y="113.5"/>
 <use href="#mic" x="193" y="139.5"/><use href="#sl" x="192" y="139.5"/><use href="#cam" x="206" y="140.5"/><use href="#sl" x="205.5" y="140"/>
 <use href="#mic" x="193" y="166"/><use href="#sl" x="192" y="166"/><use href="#cam" x="206" y="167"/><use href="#sl" x="205.5" y="166.5"/>
 <use href="#mic" x="205" y="192"/><use href="#sl" x="204" y="192"/>
</svg>
<!-- panel buttons -->
<div class="a" style="left:860px;top:518px;width:42px;height:12px;background:#fff;border:1px solid #e3e4e8;border-radius:2px;box-shadow:0 1px 1px rgba(0,0,0,0.08);font-size:8px;line-height:10px;color:#1a6ff5;text-align:center">举手</div>
<div class="a" style="left:912px;top:518px;width:42px;height:12px;background:#fff;border:1px solid #e3e4e8;border-radius:2px;box-shadow:0 1px 1px rgba(0,0,0,0.08);font-size:8px;line-height:10px;color:#1a6ff5;text-align:center">改名</div>
<!-- ===== bottom toolbar ===== -->
<div class="a" style="left:0;top:513px;width:793px;height:29px;background:#fff"></div>
<svg class="a" style="left:13px;top:517px" width="16" height="12"><path d="M4.5 4.2L10.5 1V10.5L4.5 7.6Z" fill="#333"/><circle cx="4" cy="7.8" r="2.6" fill="#fff" stroke="#333" stroke-width="1.1" stroke-dasharray="1.3 0.6"/><circle cx="4" cy="7.8" r="0.9" fill="#333"/><path d="M12.8 2Q14.6 5.7 12.8 9.6" stroke="#333" stroke-width="0.9" fill="none"/></svg>
<div class="a nw" style="left:8px;top:530px;font-size:7px;line-height:9px;color:#222">音频设置</div>
<svg class="a" style="left:37px;top:523px" width="7" height="5"><path d="M0.8 4L3.5 1.2L6.2 4" stroke="#333" stroke-width="0.9" fill="none"/></svg>
<div class="a" style="left:374px;top:514px;width:43px;height:24px;background:#eceef1;border-radius:2px"></div>
<!-- hand -->
<svg class="a" style="left:276px;top:516px" width="13" height="13"><path d="M3 12Q1 9 1.5 6.5Q2 5.8 3 6.5L3.5 7.5V2Q3.6 1.2 4.4 1.2Q5.2 1.2 5.3 2V6V1.2Q5.4 0.3 6.3 0.3Q7.2 0.3 7.2 1.2V6V1.8Q7.3 1 8.1 1Q9 1 9 1.8V6.5V3Q9.1 2.3 9.8 2.3Q10.6 2.3 10.6 3V8.5Q10.6 11.5 8.5 12.8Z" fill="#3b3e43"/></svg>
<!-- chat -->
<svg class="a" style="left:312px;top:517px" width="13" height="12"><path d="M0.5 1.5Q0.5 0.5 1.5 0.5H11.5Q12.5 0.5 12.5 1.5V8Q12.5 9 11.5 9H5L2.5 11.3V9H1.5Q0.5 9 0.5 8Z" fill="#3b3e43"/><circle cx="3.8" cy="4.8" r="0.8" fill="#fff"/><circle cx="6.5" cy="4.8" r="0.8" fill="#fff"/><circle cx="9.2" cy="4.8" r="0.8" fill="#fff"/></svg>
<!-- qa -->
<svg class="a" style="left:347px;top:516px" width="13" height="13"><path d="M0.5 1.5Q0.5 0.5 1.5 0.5H11.5Q12.5 0.5 12.5 1.5V9Q12.5 10 11.5 10H5L2.5 12.3V10H1.5Q0.5 10 0.5 9Z" fill="#3b3e43"/><text x="4.2" y="8" font-size="7.5" fill="#fff" font-family="Liberation Sans" font-weight="bold">?</text></svg>
<!-- members -->
<svg class="a" style="left:388px;top:516px" width="15" height="13"><circle cx="7" cy="3.5" r="3" fill="#3b3e43"/><path d="M1 12.5Q1 7.5 7 7.5Q13 7.5 13 12.5Z" fill="#3b3e43"/><path d="M11 1.5Q12.3 3.5 11 5.5" stroke="#3b3e43" stroke-width="0.9" fill="none"/></svg>
<!-- invite -->
<svg class="a" style="left:429px;top:516px" width="15" height="13"><circle cx="6" cy="3.5" r="3" fill="#3b3e43"/><path d="M0.5 12.5Q0.5 7.5 6 7.5Q9 7.5 10 9V12.5Z" fill="#3b3e43"/><circle cx="11" cy="10" r="3" fill="#3b3e43" stroke="#fff" stroke-width="0.8"/><path d="M9.4 10h3.2M11 8.4v3.2" stroke="#fff" stroke-width="0.8"/></svg>
<!-- apps -->
<svg class="a" style="left:465px;top:516px" width="13" height="13"><rect x="0.5" y="1" width="5" height="5" rx="0.8" fill="#3b3e43"/><rect x="0.5" y="7.5" width="5" height="5" rx="0.8" fill="#3b3e43"/><rect x="7" y="7.5" width="5" height="5" rx="0.8" fill="#3b3e43"/><path d="M9.5 0.5L12.5 3.5L9.5 6.5L6.5 3.5Z" fill="none" stroke="#3b3e43" stroke-width="0.9"/></svg>
<!-- settings -->
<svg class="a" style="left:501px;top:516px" width="13" height="13" viewBox="0 0 24 24"><path fill="#3b3e43" d="M19.4 13c.04-.3.06-.65.06-1s-.02-.7-.06-1l2.1-1.65c.2-.15.24-.42.12-.64l-2-3.46c-.12-.22-.39-.3-.61-.22l-2.49 1c-.52-.4-1.08-.73-1.69-.98l-.38-2.65A.49.49 0 0 0 14 2h-4c-.25 0-.46.18-.49.42l-.38 2.65c-.61.25-1.17.59-1.69.98l-2.49-1c-.23-.09-.49 0-.61.22l-2 3.46c-.13.22-.07.49.12.64L4.57 11c-.04.32-.07.66-.07 1s.03.68.07 1l-2.11 1.65c-.19.15-.24.42-.12.64l2 3.46c.12.22.39.3.61.22l2.49-1c.52.4 1.08.73 1.69.98l.38 2.65c.03.24.24.42.49.42h4c.25 0 .46-.18.49-.42l.38-2.65c.61-.25 1.17-.59 1.69-.98l2.49 1c.23.09.49 0 .61-.22l2-3.46c.12-.22.07-.49-.12-.64L19.4 13zM12 15.5A3.5 3.5 0 1 1 12 8.5a3.5 3.5 0 0 1 0 7z"/></svg>
<div class="bi" style="left:267px;top:530px">举手</div>
<div class="bi" style="left:304px;top:530px">聊天</div>
<div class="bi" style="left:339px;top:530px">问答</div>
<div class="a nw" style="left:374px;top:530px;width:43px;text-align:center;font-size:6.5px;line-height:8px;color:#333">参会成员(93)</div>
<div class="bi" style="left:421px;top:530px">邀请</div>
<div class="bi" style="left:456px;top:530px">应用</div>
<div class="bi" style="left:492px;top:530px">设置</div>
<div class="a" style="left:0;top:512px;width:1px;height:30px;background:#dcdcdc"></div>
<!-- leave -->
<div class="a" style="left:741px;top:517px;width:45px;height:21px;border:1px solid #fde8e8;border-right:1px solid #f07070;border-left:none"></div><div class="a" style="left:741px;top:517px;width:1px;height:1px;background:#f07070"></div><div class="a" style="left:741px;top:537px;width:1px;height:1px;background:#f07070"></div>
<div class="a nw" style="left:747px;top:523px;font-size:8px;line-height:10px;color:#f04848">离开会议</div>
<!-- ===== taskbar ===== -->
<div class="a" style="left:0;top:542px;width:1013px;height:29px;background:#dbdce9"></div>
<!-- windows -->
<svg class="a" style="left:343px;top:550px" width="15" height="14"><rect x="0.5" y="0.5" width="6.3" height="6.2" fill="#1a8fe3"/><rect x="7.7" y="0.5" width="6.3" height="6.2" fill="#2ba3f0"/><rect x="0.5" y="7.5" width="6.3" height="6.2" fill="#1a7fd8"/><rect x="7.7" y="7.5" width="6.3" height="6.2" fill="#1e8fe6"/></svg>
<!-- search -->
<svg class="a" style="left:369px;top:550px" width="15" height="15"><circle cx="8.5" cy="6" r="4.6" fill="none" stroke="#1b1b1b" stroke-width="1.5"/><path d="M5.2 9.3L1.2 13.3" stroke="#1b1b1b" stroke-width="1.7"/></svg>
<!-- todo -->
<svg class="a" style="left:394px;top:546px" width="20" height="18"><path d="M1 11L5 15L14 6" stroke="#2f6ee0" stroke-width="2.6" fill="none"/><path d="M5 15L14 6" stroke="#3a8af0" stroke-width="2.6" fill="none"/><circle cx="13.5" cy="5" r="4" fill="#1a7f8c"/><text x="11.6" y="7.6" font-size="6.5" fill="#fff" font-family="Liberation Sans">2</text></svg>
<!-- orange face x2 -->
<svg class="a" style="left:423px;top:550px" width="11" height="13"><path d="M1 4Q5 0.5 9.5 4" stroke="#f07a22" stroke-width="1.4" fill="none"/><path d="M1 9Q5 12.5 9.5 9" stroke="#f07a22" stroke-width="1.6" fill="none"/><circle cx="1" cy="2" r="0.6" fill="#444"/><circle cx="9" cy="1.6" r="0.6" fill="#444"/><circle cx="1.2" cy="11.5" r="0.5" fill="#666"/></svg>
<svg class="a" style="left:475px;top:550px" width="11" height="13"><path d="M1 4Q5 0.5 9.5 4" stroke="#f07a22" stroke-width="1.4" fill="none"/><path d="M1 9Q5 12.5 9.5 9" stroke="#f07a22" stroke-width="1.6" fill="none"/><circle cx="1" cy="2" r="0.6" fill="#444"/><circle cx="9" cy="1.6" r="0.6" fill="#444"/><circle cx="1.2" cy="11.5" r="0.5" fill="#666"/></svg>
<!-- edge -->
<svg class="a" style="left:447px;top:549px" width="16" height="16"><defs><linearGradient id="eg" x1="0" y1="0" x2="1" y2="1"><stop offset="0" stop-color="#2aa0e0"/><stop offset="0.5" stop-color="#35c0b0"/><stop offset="1" stop-color="#5ad35a"/></linearGradient></defs><circle cx="8" cy="8" r="7.3" fill="url(#eg)"/><path d="M0.8 8Q1 3 6 3Q3 5 3.5 9.5Q4.5 14 10 14.5Q12.5 14.5 14.5 12.5Q12 15.5 8 15.3Q1 15 0.8 8Z" fill="#1a5fb8"/><path d="M3 9Q3 4 7 4.5Q10.5 5 10.5 8Q9.5 6.5 8 7Q6.5 7.5 7 9.5Q8 11.5 11.5 11Q13.5 10.8 14.8 9.5Q14 13.5 10 14Q3.5 14.5 3 9Z" fill="#1e78d0"/><path d="M7 9.2Q7 7 9 7Q10.8 7.2 10.8 8.8Q10 11 7.8 10.5Z" fill="#eef2f6"/></svg>
<!-- folder -->
<svg class="a" style="left:499px;top:550px" width="16" height="15"><path d="M0.5 2Q0.5 1 1.5 1H5.5L7 2.5H14Q15 2.5 15 3.5V13Q15 14 14 14H1.5Q0.5 14 0.5 13Z" fill="#f4c441"/><rect x="0.5" y="5" width="14.5" height="9" rx="1" fill="#fcd550"/><rect x="4" y="9" width="8" height="3.5" rx="1" fill="#1a6fcc"/></svg>
<!-- qq -->
<svg class="a" style="left:526px;top:549px" width="14" height="16"><ellipse cx="7" cy="9" rx="5.5" ry="6.5" fill="#111"/><ellipse cx="7" cy="11" rx="3.5" ry="4" fill="#fff"/><path d="M2 8.5Q7 10.5 12 8.5L12 10Q7 12 2 10Z" fill="#e02020"/><ellipse cx="7" cy="7.3" rx="2" ry="1" fill="#f2b51c"/><path d="M1.5 15Q4 13 6 15ZM8 15Q10 13 12.5 15Z" fill="#f2b51c"/></svg>
<!-- notepad -->
<svg class="a" style="left:553px;top:549px" width="13" height="17"><rect x="1" y="1.5" width="11" height="13.5" rx="1" fill="#5bbde6"/><path d="M3 5h7M3 7.5h7M3 10h7" stroke="#1a6f9c" stroke-width="0.9"/><path d="M3 0.5V2.5M5 0.5V2.5M7 0.5V2.5M9 0.5V2.5" stroke="#444" stroke-width="0.7"/><rect x="1" y="15" width="11" height="1.2" fill="#c25a1a"/></svg>
<!-- word -->
<svg class="a" style="left:577px;top:550px" width="16" height="15"><rect x="4" y="0.5" width="11.5" height="14" rx="1" fill="#2b7cd3"/><rect x="4" y="5" width="11.5" height="5" fill="#185abd"/><rect x="4" y="10" width="11.5" height="4.5" fill="#103f91"/><rect x="0.5" y="3" width="8" height="8.5" rx="1" fill="#185abd"/><text x="1.5" y="9.7" font-size="6.5" fill="#fff" font-family="Liberation Sans" font-weight="bold">W</text></svg>
<!-- onenote -->
<svg class="a" style="left:603px;top:550px" width="16" height="15"><rect x="4" y="0.5" width="11.5" height="14" rx="1" fill="#ca64ea"/><rect x="11" y="0.5" width="4.5" height="14" fill="#7719aa"/><rect x="0.5" y="3" width="8" height="8.5" rx="1" fill="#7719aa"/><text x="1.8" y="9.7" font-size="6.5" fill="#fff" font-family="Liberation Sans" font-weight="bold">N</text></svg>
<!-- tencent meeting -->
<svg class="a" style="left:630px;top:550px" width="15" height="15"><rect x="0.5" y="0.5" width="14" height="14" rx="3" fill="#1a7ff5"/><path d="M2.5 9.5L5.5 5.5L8 8.5L10 5.5L12.5 9.5" stroke="#fff" stroke-width="2" fill="none" stroke-linejoin="round"/></svg>
<!-- avatar -->
<svg class="a" style="left:656px;top:550px" width="15" height="15"><circle cx="7.5" cy="7.5" r="7" fill="#5fb8d8"/><path d="M1 6Q2 0.8 7.5 0.8Q13 0.8 14 6Q12 3.5 7.5 4Q3 3.5 1 6Z" fill="#c2552a"/><circle cx="7.5" cy="8" r="4.3" fill="#f6dcc0"/><path d="M4.5 7.5h2M8.5 7.5h2" stroke="#333" stroke-width="0.8"/></svg>
<!-- running dots -->
<div class="a" style="left:453px;top:567px;width:4px;height:2px;background:#777;border-radius:1px"></div>
<div class="a" style="left:505px;top:567px;width:4px;height:2px;background:#777;border-radius:1px"></div>
<div class="a" style="left:557px;top:567px;width:4px;height:2px;background:#777;border-radius:1px"></div>
<div class="a" style="left:583px;top:567px;width:4px;height:2px;background:#777;border-radius:1px"></div>
<div class="a" style="left:635px;top:567px;width:4px;height:2px;background:#777;border-radius:1px"></div>
<div class="a" style="left:661px;top:567px;width:4px;height:2px;background:#777;border-radius:1px"></div>
<!-- tray -->
<svg class="a" style="left:839px;top:553px" width="9" height="6"><path d="M1 5L4.5 1.5L8 5" stroke="#333" stroke-width="0.9" fill="none"/></svg>
<svg class="a" style="left:853px;top:551px" width="10" height="12"><ellipse cx="5" cy="6.5" rx="4" ry="5" fill="#111"/><ellipse cx="5" cy="8" rx="2.5" ry="3" fill="#fff"/><path d="M1 5.5Q5 7.5 9 5.5V7.5Q5 9 1 7.5Z" fill="#e0208a"/><path d="M1 11.5Q3 10 4.5 11.5ZM5.5 11.5Q7 10 9 11.5Z" fill="#f2b51c"/></svg>
<svg class="a" style="left:870px;top:550px" width="10" height="14"><path d="M2 4Q2 1 5 1Q8 1 8 4V7Q8 9.5 5 9.5Q2 9.5 2 7Z" fill="none" stroke="#4aa0a8" stroke-width="1"/><path d="M5 9.5V13M3 13h4" stroke="#4aa0a8" stroke-width="1"/></svg>
<div class="a nw" style="left:887px;top:550px;font-size:11px;line-height:13px;color:#222">中</div>
<svg class="a" style="left:907px;top:553px" width="11" height="8"><path d="M0.8 3Q5.5 -1 10.2 3M2.5 4.6Q5.5 2 8.5 4.6M4 6.2Q5.5 5 7 6.2" stroke="#222" stroke-width="0.9" fill="none"/></svg>
<svg class="a" style="left:921px;top:552px" width="11" height="10"><path d="M0.5 3.5H2.5L5 1V9L2.5 6.5H0.5Z" fill="none" stroke="#222" stroke-width="0.8"/><path d="M6.8 3Q7.8 5 6.8 7M8.5 1.8Q10 5 8.5 8.2" stroke="#999" stroke-width="0.8" fill="none"/></svg>
<svg class="a" style="left:935px;top:551px" width="12" height="11"><rect x="3.5" y="3" width="8" height="6" rx="0.8" fill="#222"/><path d="M1 2V5M3 2V5M0.5 5H3.5V7H2V10" stroke="#222" stroke-width="0.9" fill="none"/></svg>
<div class="a nw" style="left:955px;top:547px;width:31px;text-align:right;font-size:7.5px;line-height:9px;color:#222">15:10</div>
<div class="a nw" style="left:952px;top:556.5px;width:34px;text-align:right;font-size:7.5px;line-height:9px;color:#222">2022/6/9</div>
<div class="a" style="left:991px;top:551.5px;width:10px;height:10px;border-radius:50%;background:#1a8794;color:#fff;font-size:7px;line-height:10px;text-align:center">1</div>
<div class="a" style="left:0;top:0;width:1px;height:36px;background:#d6d6d6"></div>
<div class="a" style="left:0;top:36px;width:1px;height:477px;background:rgba(128,128,128,0.25)"></div>
</body></html>
